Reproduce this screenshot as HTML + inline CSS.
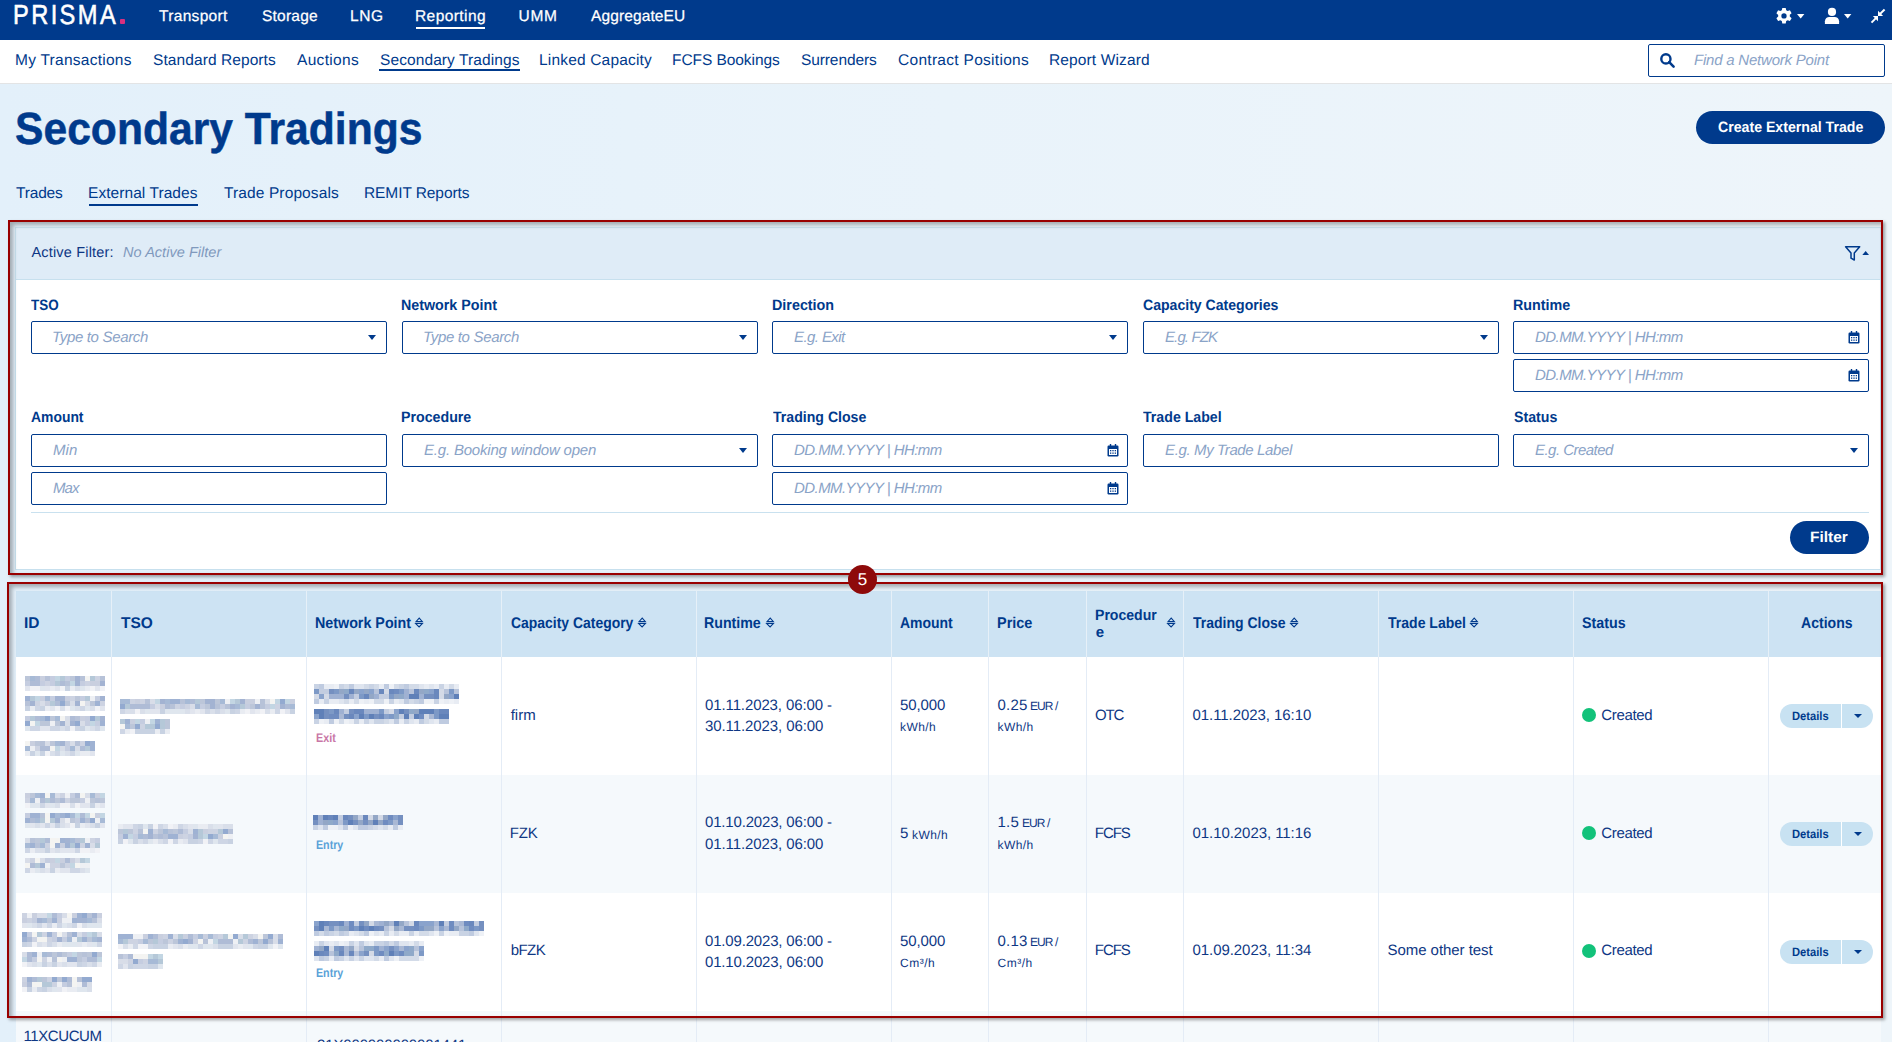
<!DOCTYPE html>
<html><head><meta charset="utf-8"><title>Secondary Tradings</title>
<style>
html,body{margin:0;padding:0;}
body{width:1892px;height:1042px;overflow:hidden;position:relative;font-family:"Liberation Sans",sans-serif;text-rendering:geometricPrecision;background:linear-gradient(90deg,#e3f0fa 0%,#e9f3fa 50%,#eef5fa 100%);}
.t{position:absolute;white-space:nowrap;}
</style></head><body>
<div style="position:absolute;left:0;top:0;width:1892px;height:40px;background:#003a8c;"></div><div class="t" style="left:12.78px;top:1.00px;line-height:27.5px;color:#fff;font-size:27.5px;font-weight:400;letter-spacing:2.786px;transform:scaleX(0.8600);transform-origin:0 0;-webkit-text-stroke:0.55px #fff;">PRISMA</div><div style="position:absolute;left:119.5px;top:18.6px;width:5.5px;height:5px;background:#d9307f;border-radius:1px;"></div><div class="t" style="left:159.00px;top:9.00px;line-height:15.5px;color:#ffffff;font-size:15.5px;font-weight:400;letter-spacing:0.319px;-webkit-text-stroke:0.25px #fff;">Transport</div><div class="t" style="left:262.00px;top:9.00px;line-height:15.5px;color:#ffffff;font-size:15.5px;font-weight:400;letter-spacing:0.222px;-webkit-text-stroke:0.25px #fff;">Storage</div><div class="t" style="left:350.00px;top:9.00px;line-height:15.5px;color:#ffffff;font-size:15.5px;font-weight:400;letter-spacing:0.593px;-webkit-text-stroke:0.25px #fff;">LNG</div><div class="t" style="left:415.00px;top:9.00px;line-height:15.5px;color:#ffffff;font-size:15.5px;font-weight:400;letter-spacing:0.427px;-webkit-text-stroke:0.25px #fff;">Reporting</div><div class="t" style="left:518.50px;top:9.00px;line-height:15.5px;color:#ffffff;font-size:15.5px;font-weight:400;letter-spacing:0.697px;-webkit-text-stroke:0.25px #fff;">UMM</div><div class="t" style="left:591.00px;top:9.00px;line-height:15.5px;color:#ffffff;font-size:15.5px;font-weight:400;letter-spacing:0.113px;-webkit-text-stroke:0.25px #fff;">AggregateEU</div><div style="position:absolute;left:416px;top:27px;width:69px;height:2px;background:#fff;"></div><svg style="position:absolute;left:1774px;top:6px" width="20" height="20" viewBox="0 0 20 20">
<path fill="#fff" fill-rule="evenodd" d="M8.3 2h3.4l.5 2.3 1.5.8 2.2-.8 1.7 2.9-1.8 1.6v1.8l1.8 1.6-1.7 2.9-2.2-.8-1.5.8-.5 2.5H8.3l-.5-2.5-1.5-.8-2.2.8-1.7-2.9 1.8-1.6V8.9L2.4 7.2l1.7-2.9 2.2.8 1.5-.8z M10 7.3a2.6 2.6 0 1 0 0 5.3 2.6 2.6 0 0 0 0-5.3z"/></svg><svg style="position:absolute;left:1796px;top:13px" width="10" height="7"><path d="M1 1H8.4L4.7 5.6z" fill="#fff"/></svg><svg style="position:absolute;left:1824px;top:7px" width="16" height="18" viewBox="0 0 16 18">
<circle cx="8" cy="4.9" r="4.1" fill="#fff"/><path fill="#fff" d="M0.9 17V14.2C0.9 11.6 3.2 10 5.2 10H10.8C12.8 10 15.1 11.6 15.1 14.2V17z"/></svg><svg style="position:absolute;left:1843px;top:13px" width="10" height="7"><path d="M1 1H8.4L4.7 5.6z" fill="#fff"/></svg><svg style="position:absolute;left:1866px;top:4px" width="24" height="24" viewBox="0 0 24 24">
<g stroke="#fff" stroke-width="2" stroke-linecap="butt"><line x1="13.6" y1="10.4" x2="18.6" y2="5.5"/><line x1="10.4" y1="13.6" x2="5.5" y2="18.6"/></g>
<path fill="#fff" d="M12 11.9V6.8L17.1 11.9z M12 12.1V17.2L6.9 12.1z"/></svg><div style="position:absolute;left:0;top:40px;width:1892px;height:43px;background:#fff;border-bottom:1px solid #e3e4e5;"></div><div class="t" style="left:15.00px;top:53.00px;line-height:15.5px;color:#003a8c;font-size:15.5px;font-weight:400;letter-spacing:0.259px;">My Transactions</div><div class="t" style="left:153.00px;top:53.00px;line-height:15.5px;color:#003a8c;font-size:15.5px;font-weight:400;letter-spacing:0.084px;">Standard Reports</div><div class="t" style="left:297.00px;top:53.00px;line-height:15.5px;color:#003a8c;font-size:15.5px;font-weight:400;letter-spacing:0.329px;">Auctions</div><div class="t" style="left:380.00px;top:53.00px;line-height:15.5px;color:#003a8c;font-size:15.5px;font-weight:400;letter-spacing:0.095px;">Secondary Tradings</div><div class="t" style="left:539.00px;top:53.00px;line-height:15.5px;color:#003a8c;font-size:15.5px;font-weight:400;letter-spacing:0.176px;">Linked Capacity</div><div class="t" style="left:672.00px;top:53.00px;line-height:15.5px;color:#003a8c;font-size:15.5px;font-weight:400;letter-spacing:-0.066px;">FCFS Bookings</div><div class="t" style="left:801.00px;top:53.00px;line-height:15.5px;color:#003a8c;font-size:15.5px;font-weight:400;letter-spacing:-0.103px;">Surrenders</div><div class="t" style="left:898.00px;top:53.00px;line-height:15.5px;color:#003a8c;font-size:15.5px;font-weight:400;letter-spacing:0.292px;">Contract Positions</div><div class="t" style="left:1049.00px;top:53.00px;line-height:15.5px;color:#003a8c;font-size:15.5px;font-weight:400;letter-spacing:0.130px;">Report Wizard</div><div style="position:absolute;left:379px;top:69px;width:141px;height:2px;background:#003a8c;"></div><div style="position:absolute;left:1648px;top:44px;width:235px;height:31px;border:1px solid #003a8c;border-radius:2px;background:#fff;"></div><svg style="position:absolute;left:1659px;top:52px" width="17" height="17" viewBox="0 0 17 17">
<circle cx="6.9" cy="6.9" r="4.6" fill="none" stroke="#003a8c" stroke-width="2.4"/><line x1="10.2" y1="10.2" x2="14.6" y2="14.6" stroke="#003a8c" stroke-width="2.6" stroke-linecap="round"/></svg><div class="t" style="left:1694.00px;top:53.00px;line-height:15px;color:#8aa3c7;font-size:15px;font-weight:400;font-style:italic;letter-spacing:-0.214px;">Find a Network Point</div><div class="t" style="left:14.55px;top:106.00px;line-height:45px;color:#003a8c;font-size:45px;font-weight:700;transform:scaleX(0.9472);transform-origin:0 0;-webkit-text-stroke:0.5px #003a8c;">Secondary Tradings</div><div style="position:absolute;left:1696px;top:111px;width:189px;height:33px;border-radius:17px;background:#003a8c;"></div><div class="t" style="left:1718.00px;top:120.00px;line-height:15px;color:#fff;font-size:15px;font-weight:700;transform:scaleX(0.9422);transform-origin:0 0;">Create External Trade</div><div class="t" style="left:16.00px;top:186.00px;line-height:15.5px;color:#003a8c;font-size:15.5px;font-weight:400;letter-spacing:-0.183px;">Trades</div><div class="t" style="left:88.00px;top:186.00px;line-height:15.5px;color:#003a8c;font-size:15.5px;font-weight:400;letter-spacing:0.065px;">External Trades</div><div class="t" style="left:224.00px;top:186.00px;line-height:15.5px;color:#003a8c;font-size:15.5px;font-weight:400;letter-spacing:0.115px;">Trade Proposals</div><div class="t" style="left:364.00px;top:186.00px;line-height:15.5px;color:#003a8c;font-size:15.5px;font-weight:400;letter-spacing:-0.087px;">REMIT Reports</div><div style="position:absolute;left:89px;top:204px;width:109px;height:2px;background:#003a8c;"></div><div style="position:absolute;left:15px;top:227px;width:1864px;height:341px;background:#fff;border:1px solid #c7e0ee;"></div><div style="position:absolute;left:16px;top:228px;width:1864px;height:51px;background:#dfecf7;border-bottom:1px solid #c7e0ee;"></div><div class="t" style="left:31.50px;top:246.00px;line-height:14.5px;color:#0e3784;font-size:14.5px;font-weight:400;letter-spacing:0.174px;">Active Filter:</div><div class="t" style="left:123.00px;top:246.00px;line-height:14.5px;color:#7f99bd;font-size:14.5px;font-weight:400;font-style:italic;letter-spacing:0.035px;">No Active Filter</div><svg style="position:absolute;left:1844px;top:244px" width="28" height="18" viewBox="0 0 28 18">
<path d="M1.6 2.7H15.7L10.3 8.9V16L7 14.2V8.9z" fill="none" stroke="#003a8c" stroke-width="1.5" stroke-linejoin="round"/>
<path d="M18.3 10.9L21.65 7.1L25 10.9z" fill="#003a8c"/></svg><div class="t" style="left:31.00px;top:298.00px;line-height:15px;color:#003a8c;font-size:15px;font-weight:700;transform:scaleX(0.8984);transform-origin:0 0;">TSO</div><div class="t" style="left:401.05px;top:298.00px;line-height:15px;color:#003a8c;font-size:15px;font-weight:700;transform:scaleX(0.9515);transform-origin:0 0;">Network Point</div><div class="t" style="left:771.54px;top:298.00px;line-height:15px;color:#003a8c;font-size:15px;font-weight:700;transform:scaleX(0.9554);transform-origin:0 0;">Direction</div><div class="t" style="left:1143.00px;top:298.00px;line-height:15px;color:#003a8c;font-size:15px;font-weight:700;transform:scaleX(0.9383);transform-origin:0 0;">Capacity Categories</div><div class="t" style="left:1513.05px;top:298.00px;line-height:15px;color:#003a8c;font-size:15px;font-weight:700;transform:scaleX(0.9547);transform-origin:0 0;">Runtime</div><div style="position:absolute;left:31px;top:321px;width:354px;height:31px;border:1px solid #003a8c;border-radius:2px;background:#fff;"></div><div class="t" style="left:52.00px;top:330.00px;line-height:15px;color:#8aa3c7;font-size:15px;font-weight:400;font-style:italic;letter-spacing:-0.328px;">Type to Search</div><div style="position:absolute;left:367.5px;top:335px;width:0;height:0;border-left:4.5px solid transparent;border-right:4.5px solid transparent;border-top:5px solid #003a8c;"></div><div style="position:absolute;left:402px;top:321px;width:354px;height:31px;border:1px solid #003a8c;border-radius:2px;background:#fff;"></div><div class="t" style="left:423.00px;top:330.00px;line-height:15px;color:#8aa3c7;font-size:15px;font-weight:400;font-style:italic;letter-spacing:-0.328px;">Type to Search</div><div style="position:absolute;left:738.5px;top:335px;width:0;height:0;border-left:4.5px solid transparent;border-right:4.5px solid transparent;border-top:5px solid #003a8c;"></div><div style="position:absolute;left:772px;top:321px;width:354px;height:31px;border:1px solid #003a8c;border-radius:2px;background:#fff;"></div><div class="t" style="left:794.00px;top:330.00px;line-height:15px;color:#8aa3c7;font-size:15px;font-weight:400;font-style:italic;letter-spacing:-0.586px;">E.g. Exit</div><div style="position:absolute;left:1108.5px;top:335px;width:0;height:0;border-left:4.5px solid transparent;border-right:4.5px solid transparent;border-top:5px solid #003a8c;"></div><div style="position:absolute;left:1143px;top:321px;width:354px;height:31px;border:1px solid #003a8c;border-radius:2px;background:#fff;"></div><div class="t" style="left:1165.00px;top:330.00px;line-height:15px;color:#8aa3c7;font-size:15px;font-weight:400;font-style:italic;letter-spacing:-0.882px;">E.g. FZK</div><div style="position:absolute;left:1479.5px;top:335px;width:0;height:0;border-left:4.5px solid transparent;border-right:4.5px solid transparent;border-top:5px solid #003a8c;"></div><div style="position:absolute;left:1513px;top:321px;width:354px;height:31px;border:1px solid #003a8c;border-radius:2px;background:#fff;"></div><div class="t" style="left:1535.00px;top:330.00px;line-height:15px;color:#8aa3c7;font-size:15px;font-weight:400;font-style:italic;letter-spacing:-0.563px;">DD.MM.YYYY | HH:mm</div><svg style="position:absolute;left:1848px;top:331px" width="12" height="13" viewBox="0 0 12 13">
<rect x="0.5" y="1.5" width="11" height="11" rx="1.2" fill="#003a8c"/><rect x="2" y="5" width="8" height="6" fill="#fff"/>
<rect x="2.8" y="0" width="1.4" height="3" fill="#003a8c"/><rect x="7.8" y="0" width="1.4" height="3" fill="#003a8c"/>
<g fill="#003a8c"><rect x="3" y="6" width="1.3" height="1.3"/><rect x="5.35" y="6" width="1.3" height="1.3"/><rect x="7.7" y="6" width="1.3" height="1.3"/>
<rect x="3" y="8.5" width="1.3" height="1.3"/><rect x="5.35" y="8.5" width="1.3" height="1.3"/><rect x="7.7" y="8.5" width="1.3" height="1.3"/></g></svg><div style="position:absolute;left:1513px;top:359px;width:354px;height:31px;border:1px solid #003a8c;border-radius:2px;background:#fff;"></div><div class="t" style="left:1535.00px;top:368.00px;line-height:15px;color:#8aa3c7;font-size:15px;font-weight:400;font-style:italic;letter-spacing:-0.563px;">DD.MM.YYYY | HH:mm</div><svg style="position:absolute;left:1848px;top:369px" width="12" height="13" viewBox="0 0 12 13">
<rect x="0.5" y="1.5" width="11" height="11" rx="1.2" fill="#003a8c"/><rect x="2" y="5" width="8" height="6" fill="#fff"/>
<rect x="2.8" y="0" width="1.4" height="3" fill="#003a8c"/><rect x="7.8" y="0" width="1.4" height="3" fill="#003a8c"/>
<g fill="#003a8c"><rect x="3" y="6" width="1.3" height="1.3"/><rect x="5.35" y="6" width="1.3" height="1.3"/><rect x="7.7" y="6" width="1.3" height="1.3"/>
<rect x="3" y="8.5" width="1.3" height="1.3"/><rect x="5.35" y="8.5" width="1.3" height="1.3"/><rect x="7.7" y="8.5" width="1.3" height="1.3"/></g></svg><div class="t" style="left:31.00px;top:410.00px;line-height:15px;color:#003a8c;font-size:15px;font-weight:700;transform:scaleX(0.9266);transform-origin:0 0;">Amount</div><div class="t" style="left:401.05px;top:410.00px;line-height:15px;color:#003a8c;font-size:15px;font-weight:700;transform:scaleX(0.9471);transform-origin:0 0;">Procedure</div><div class="t" style="left:772.50px;top:410.00px;line-height:15px;color:#003a8c;font-size:15px;font-weight:700;transform:scaleX(0.9409);transform-origin:0 0;">Trading Close</div><div class="t" style="left:1143.00px;top:410.00px;line-height:15px;color:#003a8c;font-size:15px;font-weight:700;transform:scaleX(0.9435);transform-origin:0 0;">Trade Label</div><div class="t" style="left:1514.00px;top:410.00px;line-height:15px;color:#003a8c;font-size:15px;font-weight:700;transform:scaleX(0.9451);transform-origin:0 0;">Status</div><div style="position:absolute;left:31px;top:434px;width:354px;height:31px;border:1px solid #003a8c;border-radius:2px;background:#fff;"></div><div class="t" style="left:53.00px;top:443.00px;line-height:15px;color:#8aa3c7;font-size:15px;font-weight:400;font-style:italic;letter-spacing:0.086px;">Min</div><div style="position:absolute;left:31px;top:472px;width:354px;height:31px;border:1px solid #003a8c;border-radius:2px;background:#fff;"></div><div class="t" style="left:53.00px;top:481.00px;line-height:15px;color:#8aa3c7;font-size:15px;font-weight:400;font-style:italic;letter-spacing:-0.919px;">Max</div><div style="position:absolute;left:402px;top:434px;width:354px;height:31px;border:1px solid #003a8c;border-radius:2px;background:#fff;"></div><div class="t" style="left:424.00px;top:443.00px;line-height:15px;color:#8aa3c7;font-size:15px;font-weight:400;font-style:italic;letter-spacing:-0.193px;">E.g. Booking window open</div><div style="position:absolute;left:738.5px;top:448px;width:0;height:0;border-left:4.5px solid transparent;border-right:4.5px solid transparent;border-top:5px solid #003a8c;"></div><div style="position:absolute;left:772px;top:434px;width:354px;height:31px;border:1px solid #003a8c;border-radius:2px;background:#fff;"></div><div class="t" style="left:794.00px;top:443.00px;line-height:15px;color:#8aa3c7;font-size:15px;font-weight:400;font-style:italic;letter-spacing:-0.563px;">DD.MM.YYYY | HH:mm</div><svg style="position:absolute;left:1107px;top:444px" width="12" height="13" viewBox="0 0 12 13">
<rect x="0.5" y="1.5" width="11" height="11" rx="1.2" fill="#003a8c"/><rect x="2" y="5" width="8" height="6" fill="#fff"/>
<rect x="2.8" y="0" width="1.4" height="3" fill="#003a8c"/><rect x="7.8" y="0" width="1.4" height="3" fill="#003a8c"/>
<g fill="#003a8c"><rect x="3" y="6" width="1.3" height="1.3"/><rect x="5.35" y="6" width="1.3" height="1.3"/><rect x="7.7" y="6" width="1.3" height="1.3"/>
<rect x="3" y="8.5" width="1.3" height="1.3"/><rect x="5.35" y="8.5" width="1.3" height="1.3"/><rect x="7.7" y="8.5" width="1.3" height="1.3"/></g></svg><div style="position:absolute;left:772px;top:472px;width:354px;height:31px;border:1px solid #003a8c;border-radius:2px;background:#fff;"></div><div class="t" style="left:794.00px;top:481.00px;line-height:15px;color:#8aa3c7;font-size:15px;font-weight:400;font-style:italic;letter-spacing:-0.563px;">DD.MM.YYYY | HH:mm</div><svg style="position:absolute;left:1107px;top:482px" width="12" height="13" viewBox="0 0 12 13">
<rect x="0.5" y="1.5" width="11" height="11" rx="1.2" fill="#003a8c"/><rect x="2" y="5" width="8" height="6" fill="#fff"/>
<rect x="2.8" y="0" width="1.4" height="3" fill="#003a8c"/><rect x="7.8" y="0" width="1.4" height="3" fill="#003a8c"/>
<g fill="#003a8c"><rect x="3" y="6" width="1.3" height="1.3"/><rect x="5.35" y="6" width="1.3" height="1.3"/><rect x="7.7" y="6" width="1.3" height="1.3"/>
<rect x="3" y="8.5" width="1.3" height="1.3"/><rect x="5.35" y="8.5" width="1.3" height="1.3"/><rect x="7.7" y="8.5" width="1.3" height="1.3"/></g></svg><div style="position:absolute;left:1143px;top:434px;width:354px;height:31px;border:1px solid #003a8c;border-radius:2px;background:#fff;"></div><div class="t" style="left:1165.00px;top:443.00px;line-height:15px;color:#8aa3c7;font-size:15px;font-weight:400;font-style:italic;letter-spacing:-0.368px;">E.g. My Trade Label</div><div style="position:absolute;left:1513px;top:434px;width:354px;height:31px;border:1px solid #003a8c;border-radius:2px;background:#fff;"></div><div class="t" style="left:1535.00px;top:443.00px;line-height:15px;color:#8aa3c7;font-size:15px;font-weight:400;font-style:italic;letter-spacing:-0.534px;">E.g. Created</div><div style="position:absolute;left:1849.5px;top:448px;width:0;height:0;border-left:4.5px solid transparent;border-right:4.5px solid transparent;border-top:5px solid #003a8c;"></div><div style="position:absolute;left:31px;top:512px;width:1838px;height:1px;background:#c9e1ef;"></div><div style="position:absolute;left:1790px;top:521px;width:79px;height:33px;border-radius:17px;background:#003a8c;"></div><div class="t" style="left:1809.97px;top:530.00px;line-height:15px;color:#fff;font-size:15px;font-weight:700;transform:scaleX(1.0325);transform-origin:0 0;">Filter</div><div style="position:absolute;left:16px;top:591px;width:1865px;height:66px;background:#cde3f3;"></div><div style="position:absolute;left:16px;top:657px;width:1865px;height:118px;background:#ffffff;"></div><div style="position:absolute;left:16px;top:775px;width:1865px;height:118px;background:#f5f9fc;"></div><div style="position:absolute;left:16px;top:893px;width:1865px;height:118px;background:#ffffff;"></div><div style="position:absolute;left:16px;top:1011px;width:1865px;height:118px;background:#f5f9fc;"></div><div style="position:absolute;left:111px;top:591px;width:1px;height:66px;background:#e6f0f8;"></div><div style="position:absolute;left:111px;top:657px;width:1px;height:385px;background:#e4ecf6;"></div><div style="position:absolute;left:306px;top:591px;width:1px;height:66px;background:#e6f0f8;"></div><div style="position:absolute;left:306px;top:657px;width:1px;height:385px;background:#e4ecf6;"></div><div style="position:absolute;left:501px;top:591px;width:1px;height:66px;background:#e6f0f8;"></div><div style="position:absolute;left:501px;top:657px;width:1px;height:385px;background:#e4ecf6;"></div><div style="position:absolute;left:696px;top:591px;width:1px;height:66px;background:#e6f0f8;"></div><div style="position:absolute;left:696px;top:657px;width:1px;height:385px;background:#e4ecf6;"></div><div style="position:absolute;left:891px;top:591px;width:1px;height:66px;background:#e6f0f8;"></div><div style="position:absolute;left:891px;top:657px;width:1px;height:385px;background:#e4ecf6;"></div><div style="position:absolute;left:988px;top:591px;width:1px;height:66px;background:#e6f0f8;"></div><div style="position:absolute;left:988px;top:657px;width:1px;height:385px;background:#e4ecf6;"></div><div style="position:absolute;left:1086px;top:591px;width:1px;height:66px;background:#e6f0f8;"></div><div style="position:absolute;left:1086px;top:657px;width:1px;height:385px;background:#e4ecf6;"></div><div style="position:absolute;left:1183px;top:591px;width:1px;height:66px;background:#e6f0f8;"></div><div style="position:absolute;left:1183px;top:657px;width:1px;height:385px;background:#e4ecf6;"></div><div style="position:absolute;left:1378px;top:591px;width:1px;height:66px;background:#e6f0f8;"></div><div style="position:absolute;left:1378px;top:657px;width:1px;height:385px;background:#e4ecf6;"></div><div style="position:absolute;left:1573px;top:591px;width:1px;height:66px;background:#e6f0f8;"></div><div style="position:absolute;left:1573px;top:657px;width:1px;height:385px;background:#e4ecf6;"></div><div style="position:absolute;left:1768px;top:591px;width:1px;height:66px;background:#e6f0f8;"></div><div style="position:absolute;left:1768px;top:657px;width:1px;height:385px;background:#e4ecf6;"></div><div class="t" style="left:24.00px;top:616.00px;line-height:15.5px;color:#003a8c;font-size:15.5px;font-weight:700;">ID</div><div class="t" style="left:121.00px;top:616.00px;line-height:15.5px;color:#003a8c;font-size:15.5px;font-weight:700;">TSO</div><div class="t" style="left:315.08px;top:616.00px;line-height:15.5px;color:#003a8c;font-size:15.5px;font-weight:700;transform:scaleX(0.9220);transform-origin:0 0;">Network Point</div><svg style="position:absolute;left:414px;top:616px" width="10" height="12" viewBox="0 0 10 12">
<path d="M2 5.6H8.4L5.2 2.1z M1.6 7.4H8.4L5.1 10.9z" fill="none" stroke="#003a8c" stroke-width="1.05" stroke-linejoin="miter"/></svg><div class="t" style="left:510.50px;top:616.00px;line-height:15.5px;color:#003a8c;font-size:15.5px;font-weight:700;transform:scaleX(0.8990);transform-origin:0 0;">Capacity Category</div><svg style="position:absolute;left:636.5px;top:616px" width="10" height="12" viewBox="0 0 10 12">
<path d="M2 5.6H8.4L5.2 2.1z M1.6 7.4H8.4L5.1 10.9z" fill="none" stroke="#003a8c" stroke-width="1.05" stroke-linejoin="miter"/></svg><div class="t" style="left:704.08px;top:616.00px;line-height:15.5px;color:#003a8c;font-size:15.5px;font-weight:700;transform:scaleX(0.9156);transform-origin:0 0;">Runtime</div><svg style="position:absolute;left:764.5px;top:616px" width="10" height="12" viewBox="0 0 10 12">
<path d="M2 5.6H8.4L5.2 2.1z M1.6 7.4H8.4L5.1 10.9z" fill="none" stroke="#003a8c" stroke-width="1.05" stroke-linejoin="miter"/></svg><div class="t" style="left:900.00px;top:616.00px;line-height:15.5px;color:#003a8c;font-size:15.5px;font-weight:700;transform:scaleX(0.9010);transform-origin:0 0;">Amount</div><div class="t" style="left:996.57px;top:616.00px;line-height:15.5px;color:#003a8c;font-size:15.5px;font-weight:700;transform:scaleX(0.9330);transform-origin:0 0;">Price</div><div class="t" style="left:1094.86px;top:608.00px;line-height:15px;color:#003a8c;font-size:15px;font-weight:700;transform:scaleX(0.9383);transform-origin:0 0;">Procedur</div><div class="t" style="left:1095.80px;top:625.00px;line-height:15px;color:#003a8c;font-size:15px;font-weight:700;">e</div><svg style="position:absolute;left:1165.5px;top:616px" width="10" height="12" viewBox="0 0 10 12">
<path d="M2 5.6H8.4L5.2 2.1z M1.6 7.4H8.4L5.1 10.9z" fill="none" stroke="#003a8c" stroke-width="1.05" stroke-linejoin="miter"/></svg><div class="t" style="left:1192.50px;top:616.00px;line-height:15.5px;color:#003a8c;font-size:15.5px;font-weight:700;transform:scaleX(0.9041);transform-origin:0 0;">Trading Close</div><svg style="position:absolute;left:1288.5px;top:616px" width="10" height="12" viewBox="0 0 10 12">
<path d="M2 5.6H8.4L5.2 2.1z M1.6 7.4H8.4L5.1 10.9z" fill="none" stroke="#003a8c" stroke-width="1.05" stroke-linejoin="miter"/></svg><div class="t" style="left:1388.00px;top:616.00px;line-height:15.5px;color:#003a8c;font-size:15.5px;font-weight:700;transform:scaleX(0.9052);transform-origin:0 0;">Trade Label</div><svg style="position:absolute;left:1469px;top:616px" width="10" height="12" viewBox="0 0 10 12">
<path d="M2 5.6H8.4L5.2 2.1z M1.6 7.4H8.4L5.1 10.9z" fill="none" stroke="#003a8c" stroke-width="1.05" stroke-linejoin="miter"/></svg><div class="t" style="left:1582.00px;top:616.00px;line-height:15.5px;color:#003a8c;font-size:15.5px;font-weight:700;transform:scaleX(0.9198);transform-origin:0 0;">Status</div><div class="t" style="left:1801.00px;top:616.00px;line-height:15.5px;color:#003a8c;font-size:15.5px;font-weight:700;transform:scaleX(0.9072);transform-origin:0 0;">Actions</div><svg style="position:absolute;left:25px;top:676px" width="80" height="15" shape-rendering="crispEdges"><rect x="0" y="0" width="5" height="5" fill="#bcc6d9"/><rect x="5" y="0" width="5" height="5" fill="#a7bad6"/><rect x="10" y="0" width="5" height="5" fill="#afbcd6"/><rect x="15" y="0" width="5" height="5" fill="#c9cfdf"/><rect x="20" y="0" width="5" height="5" fill="#b7c2d8"/><rect x="25" y="0" width="5" height="5" fill="#c5cde0"/><rect x="30" y="0" width="5" height="5" fill="#c3d6e3"/><rect x="35" y="0" width="5" height="5" fill="#b5c8d8"/><rect x="40" y="0" width="5" height="5" fill="#c5cde0"/><rect x="45" y="0" width="5" height="5" fill="#bcc6d9"/><rect x="50" y="0" width="5" height="5" fill="#a3b3d2"/><rect x="55" y="0" width="5" height="5" fill="#b7c2d8"/><rect x="60" y="0" width="5" height="5" fill="#f4f4f2"/><rect x="65" y="0" width="5" height="5" fill="#b5c8d8"/><rect x="70" y="0" width="5" height="5" fill="#cdd3e2"/><rect x="75" y="0" width="5" height="5" fill="#b7c2d8"/><rect x="0" y="5" width="5" height="5" fill="#c5cde0"/><rect x="5" y="5" width="5" height="5" fill="#afbcd6"/><rect x="10" y="5" width="5" height="5" fill="#afbcd6"/><rect x="15" y="5" width="5" height="5" fill="#c5cde0"/><rect x="20" y="5" width="5" height="5" fill="#cdd3e2"/><rect x="25" y="5" width="5" height="5" fill="#c5cde0"/><rect x="30" y="5" width="5" height="5" fill="#b5c8d8"/><rect x="35" y="5" width="5" height="5" fill="#afbcd6"/><rect x="40" y="5" width="5" height="5" fill="#b7c2d8"/><rect x="45" y="5" width="5" height="5" fill="#c3d6e3"/><rect x="50" y="5" width="5" height="5" fill="#a3b3d2"/><rect x="55" y="5" width="5" height="5" fill="#c5cde0"/><rect x="60" y="5" width="5" height="5" fill="#cdd3e2"/><rect x="65" y="5" width="5" height="5" fill="#c9cfdf"/><rect x="70" y="5" width="5" height="5" fill="#c9cfdf"/><rect x="75" y="5" width="5" height="5" fill="#a3b3d2"/><rect x="0" y="10" width="5" height="5" fill="#e1e5ee"/><rect x="5" y="10" width="5" height="5" fill="#f1f2f6"/><rect x="10" y="10" width="5" height="5" fill="#f1f2f6"/><rect x="15" y="10" width="5" height="5" fill="#dfe6ee"/><rect x="20" y="10" width="5" height="5" fill="#e1e5ee"/><rect x="25" y="10" width="5" height="5" fill="#e9ecf2"/><rect x="30" y="10" width="5" height="5" fill="#e1e5ee"/><rect x="35" y="10" width="5" height="5" fill="#f1f2f6"/><rect x="40" y="10" width="5" height="5" fill="#c8d2e2"/><rect x="45" y="10" width="5" height="5" fill="#e9ecf2"/><rect x="50" y="10" width="5" height="5" fill="#d9dfea"/><rect x="55" y="10" width="5" height="5" fill="#dfe6ee"/><rect x="60" y="10" width="5" height="5" fill="#e9ecf2"/><rect x="65" y="10" width="5" height="5" fill="#f1f2f6"/><rect x="70" y="10" width="5" height="5" fill="#e1e5ee"/><rect x="75" y="10" width="5" height="5" fill="#f1f2f6"/></svg><svg style="position:absolute;left:25px;top:696px" width="80" height="15" shape-rendering="crispEdges"><rect x="0" y="0" width="5" height="5" fill="#9fb2d3"/><rect x="5" y="0" width="5" height="5" fill="#b5c8d8"/><rect x="10" y="0" width="5" height="5" fill="#c3d6e3"/><rect x="15" y="0" width="5" height="5" fill="#c9cfdf"/><rect x="20" y="0" width="5" height="5" fill="#a7bad6"/><rect x="25" y="0" width="5" height="5" fill="#c5cde0"/><rect x="30" y="0" width="5" height="5" fill="#a3b3d2"/><rect x="35" y="0" width="5" height="5" fill="#a3b3d2"/><rect x="40" y="0" width="5" height="5" fill="#c9cfdf"/><rect x="45" y="0" width="5" height="5" fill="#cdd3e2"/><rect x="50" y="0" width="5" height="5" fill="#bcc6d9"/><rect x="55" y="0" width="5" height="5" fill="#c5cde0"/><rect x="60" y="0" width="5" height="5" fill="#b5c8d8"/><rect x="65" y="0" width="5" height="5" fill="#eef0f4"/><rect x="70" y="0" width="5" height="5" fill="#c5cde0"/><rect x="75" y="0" width="5" height="5" fill="#a3b3d2"/><rect x="0" y="5" width="5" height="5" fill="#b7c2d8"/><rect x="5" y="5" width="5" height="5" fill="#a3b3d2"/><rect x="10" y="5" width="5" height="5" fill="#cdd3e2"/><rect x="15" y="5" width="5" height="5" fill="#d8dde8"/><rect x="20" y="5" width="5" height="5" fill="#c9cfdf"/><rect x="25" y="5" width="5" height="5" fill="#b5c8d8"/><rect x="30" y="5" width="5" height="5" fill="#afbcd6"/><rect x="35" y="5" width="5" height="5" fill="#93aad0"/><rect x="40" y="5" width="5" height="5" fill="#bcc6d9"/><rect x="45" y="5" width="5" height="5" fill="#d8dde8"/><rect x="50" y="5" width="5" height="5" fill="#a3b3d2"/><rect x="55" y="5" width="5" height="5" fill="#f4f4f2"/><rect x="60" y="5" width="5" height="5" fill="#d8dde8"/><rect x="65" y="5" width="5" height="5" fill="#bcc6d9"/><rect x="70" y="5" width="5" height="5" fill="#9fb2d3"/><rect x="75" y="5" width="5" height="5" fill="#cdd3e2"/><rect x="0" y="10" width="5" height="5" fill="#c8d2e2"/><rect x="5" y="10" width="5" height="5" fill="#e9ecf2"/><rect x="10" y="10" width="5" height="5" fill="#ced6e5"/><rect x="15" y="10" width="5" height="5" fill="#c8d2e2"/><rect x="20" y="10" width="5" height="5" fill="#e9ecf2"/><rect x="25" y="10" width="5" height="5" fill="#e1e5ee"/><rect x="30" y="10" width="5" height="5" fill="#f1f2f6"/><rect x="35" y="10" width="5" height="5" fill="#d9dfea"/><rect x="40" y="10" width="5" height="5" fill="#f1f2f6"/><rect x="45" y="10" width="5" height="5" fill="#dfe6ee"/><rect x="50" y="10" width="5" height="5" fill="#d9dfea"/><rect x="55" y="10" width="5" height="5" fill="#ced6e5"/><rect x="60" y="10" width="5" height="5" fill="#dfe6ee"/><rect x="65" y="10" width="5" height="5" fill="#d9dfea"/><rect x="70" y="10" width="5" height="5" fill="#f1f2f6"/><rect x="75" y="10" width="5" height="5" fill="#e1e5ee"/></svg><svg style="position:absolute;left:25px;top:716px" width="80" height="15" shape-rendering="crispEdges"><rect x="0" y="0" width="5" height="5" fill="#c5cde0"/><rect x="5" y="0" width="5" height="5" fill="#b5c8d8"/><rect x="10" y="0" width="5" height="5" fill="#afbcd6"/><rect x="15" y="0" width="5" height="5" fill="#a7bad6"/><rect x="20" y="0" width="5" height="5" fill="#93aad0"/><rect x="25" y="0" width="5" height="5" fill="#bcc6d9"/><rect x="30" y="0" width="5" height="5" fill="#a7bad6"/><rect x="35" y="0" width="5" height="5" fill="#f4f4f2"/><rect x="40" y="0" width="5" height="5" fill="#d8dde8"/><rect x="45" y="0" width="5" height="5" fill="#afbcd6"/><rect x="50" y="0" width="5" height="5" fill="#b7c2d8"/><rect x="55" y="0" width="5" height="5" fill="#c9cfdf"/><rect x="60" y="0" width="5" height="5" fill="#c5cde0"/><rect x="65" y="0" width="5" height="5" fill="#93aad0"/><rect x="70" y="0" width="5" height="5" fill="#b5c8d8"/><rect x="75" y="0" width="5" height="5" fill="#a3b3d2"/><rect x="0" y="5" width="5" height="5" fill="#93aad0"/><rect x="5" y="5" width="5" height="5" fill="#f4f4f2"/><rect x="10" y="5" width="5" height="5" fill="#c3d6e3"/><rect x="15" y="5" width="5" height="5" fill="#bcc6d9"/><rect x="20" y="5" width="5" height="5" fill="#bcc6d9"/><rect x="25" y="5" width="5" height="5" fill="#eef0f4"/><rect x="30" y="5" width="5" height="5" fill="#bcc6d9"/><rect x="35" y="5" width="5" height="5" fill="#a3b3d2"/><rect x="40" y="5" width="5" height="5" fill="#d8dde8"/><rect x="45" y="5" width="5" height="5" fill="#a3b3d2"/><rect x="50" y="5" width="5" height="5" fill="#93aad0"/><rect x="55" y="5" width="5" height="5" fill="#d8dde8"/><rect x="60" y="5" width="5" height="5" fill="#c5cde0"/><rect x="65" y="5" width="5" height="5" fill="#c3d6e3"/><rect x="70" y="5" width="5" height="5" fill="#c5cde0"/><rect x="75" y="5" width="5" height="5" fill="#9fb2d3"/><rect x="0" y="10" width="5" height="5" fill="#dfe6ee"/><rect x="5" y="10" width="5" height="5" fill="#ced6e5"/><rect x="10" y="10" width="5" height="5" fill="#ced6e5"/><rect x="15" y="10" width="5" height="5" fill="#e1e5ee"/><rect x="20" y="10" width="5" height="5" fill="#e1e5ee"/><rect x="25" y="10" width="5" height="5" fill="#ced6e5"/><rect x="30" y="10" width="5" height="5" fill="#ced6e5"/><rect x="35" y="10" width="5" height="5" fill="#d9dfea"/><rect x="40" y="10" width="5" height="5" fill="#ced6e5"/><rect x="45" y="10" width="5" height="5" fill="#f1f2f6"/><rect x="50" y="10" width="5" height="5" fill="#ced6e5"/><rect x="55" y="10" width="5" height="5" fill="#c8d2e2"/><rect x="60" y="10" width="5" height="5" fill="#dfe6ee"/><rect x="65" y="10" width="5" height="5" fill="#d9dfea"/><rect x="70" y="10" width="5" height="5" fill="#ced6e5"/><rect x="75" y="10" width="5" height="5" fill="#dfe6ee"/></svg><svg style="position:absolute;left:25px;top:741px" width="70" height="15" shape-rendering="crispEdges"><rect x="0" y="0" width="5" height="5" fill="#f4f4f2"/><rect x="5" y="0" width="5" height="5" fill="#c9cfdf"/><rect x="10" y="0" width="5" height="5" fill="#bcc6d9"/><rect x="15" y="0" width="5" height="5" fill="#b7c2d8"/><rect x="20" y="0" width="5" height="5" fill="#d8dde8"/><rect x="25" y="0" width="5" height="5" fill="#bcc6d9"/><rect x="30" y="0" width="5" height="5" fill="#a7bad6"/><rect x="35" y="0" width="5" height="5" fill="#a3b3d2"/><rect x="40" y="0" width="5" height="5" fill="#c5cde0"/><rect x="45" y="0" width="5" height="5" fill="#d8dde8"/><rect x="50" y="0" width="5" height="5" fill="#b7c2d8"/><rect x="55" y="0" width="5" height="5" fill="#cdd3e2"/><rect x="60" y="0" width="5" height="5" fill="#93aad0"/><rect x="65" y="0" width="5" height="5" fill="#9fb2d3"/><rect x="0" y="5" width="5" height="5" fill="#a7bad6"/><rect x="5" y="5" width="5" height="5" fill="#eef0f4"/><rect x="10" y="5" width="5" height="5" fill="#cdd3e2"/><rect x="15" y="5" width="5" height="5" fill="#afbcd6"/><rect x="20" y="5" width="5" height="5" fill="#afbcd6"/><rect x="25" y="5" width="5" height="5" fill="#f4f4f2"/><rect x="30" y="5" width="5" height="5" fill="#c3d6e3"/><rect x="35" y="5" width="5" height="5" fill="#d8dde8"/><rect x="40" y="5" width="5" height="5" fill="#c5cde0"/><rect x="45" y="5" width="5" height="5" fill="#a7bad6"/><rect x="50" y="5" width="5" height="5" fill="#d8dde8"/><rect x="55" y="5" width="5" height="5" fill="#afbcd6"/><rect x="60" y="5" width="5" height="5" fill="#b5c8d8"/><rect x="65" y="5" width="5" height="5" fill="#9fb2d3"/><rect x="0" y="10" width="5" height="5" fill="#e9ecf2"/><rect x="5" y="10" width="5" height="5" fill="#c8d2e2"/><rect x="10" y="10" width="5" height="5" fill="#dfe6ee"/><rect x="15" y="10" width="5" height="5" fill="#c8d2e2"/><rect x="20" y="10" width="5" height="5" fill="#f1f2f6"/><rect x="25" y="10" width="5" height="5" fill="#d9dfea"/><rect x="30" y="10" width="5" height="5" fill="#ced6e5"/><rect x="35" y="10" width="5" height="5" fill="#dfe6ee"/><rect x="40" y="10" width="5" height="5" fill="#d9dfea"/><rect x="45" y="10" width="5" height="5" fill="#ced6e5"/><rect x="50" y="10" width="5" height="5" fill="#dfe6ee"/><rect x="55" y="10" width="5" height="5" fill="#e9ecf2"/><rect x="60" y="10" width="5" height="5" fill="#e9ecf2"/><rect x="65" y="10" width="5" height="5" fill="#e1e5ee"/></svg><svg style="position:absolute;left:120px;top:699px" width="175" height="15" shape-rendering="crispEdges"><rect x="0" y="0" width="5" height="5" fill="#a7bad6"/><rect x="5" y="0" width="5" height="5" fill="#a7bad6"/><rect x="10" y="0" width="5" height="5" fill="#cdd3e2"/><rect x="15" y="0" width="5" height="5" fill="#c9cfdf"/><rect x="20" y="0" width="5" height="5" fill="#cdd3e2"/><rect x="25" y="0" width="5" height="5" fill="#b7c2d8"/><rect x="30" y="0" width="5" height="5" fill="#d8dde8"/><rect x="35" y="0" width="5" height="5" fill="#c3d6e3"/><rect x="40" y="0" width="5" height="5" fill="#a3b3d2"/><rect x="45" y="0" width="5" height="5" fill="#a7bad6"/><rect x="50" y="0" width="5" height="5" fill="#9fb2d3"/><rect x="55" y="0" width="5" height="5" fill="#9fb2d3"/><rect x="60" y="0" width="5" height="5" fill="#b7c2d8"/><rect x="65" y="0" width="5" height="5" fill="#a7bad6"/><rect x="70" y="0" width="5" height="5" fill="#afbcd6"/><rect x="75" y="0" width="5" height="5" fill="#b5c8d8"/><rect x="80" y="0" width="5" height="5" fill="#bcc6d9"/><rect x="85" y="0" width="5" height="5" fill="#a3b3d2"/><rect x="90" y="0" width="5" height="5" fill="#a3b3d2"/><rect x="95" y="0" width="5" height="5" fill="#bcc6d9"/><rect x="100" y="0" width="5" height="5" fill="#a7bad6"/><rect x="105" y="0" width="5" height="5" fill="#eef0f4"/><rect x="110" y="0" width="5" height="5" fill="#c3d6e3"/><rect x="115" y="0" width="5" height="5" fill="#b5c8d8"/><rect x="120" y="0" width="5" height="5" fill="#a3b3d2"/><rect x="125" y="0" width="5" height="5" fill="#c9cfdf"/><rect x="130" y="0" width="5" height="5" fill="#c9cfdf"/><rect x="135" y="0" width="5" height="5" fill="#eef0f4"/><rect x="140" y="0" width="5" height="5" fill="#b7c2d8"/><rect x="145" y="0" width="5" height="5" fill="#d8dde8"/><rect x="150" y="0" width="5" height="5" fill="#f4f4f2"/><rect x="155" y="0" width="5" height="5" fill="#c3d6e3"/><rect x="160" y="0" width="5" height="5" fill="#93aad0"/><rect x="165" y="0" width="5" height="5" fill="#c3d6e3"/><rect x="170" y="0" width="5" height="5" fill="#c9cfdf"/><rect x="0" y="5" width="5" height="5" fill="#93aad0"/><rect x="5" y="5" width="5" height="5" fill="#b5c8d8"/><rect x="10" y="5" width="5" height="5" fill="#afbcd6"/><rect x="15" y="5" width="5" height="5" fill="#afbcd6"/><rect x="20" y="5" width="5" height="5" fill="#afbcd6"/><rect x="25" y="5" width="5" height="5" fill="#afbcd6"/><rect x="30" y="5" width="5" height="5" fill="#c5cde0"/><rect x="35" y="5" width="5" height="5" fill="#d8dde8"/><rect x="40" y="5" width="5" height="5" fill="#c9cfdf"/><rect x="45" y="5" width="5" height="5" fill="#afbcd6"/><rect x="50" y="5" width="5" height="5" fill="#b7c2d8"/><rect x="55" y="5" width="5" height="5" fill="#cdd3e2"/><rect x="60" y="5" width="5" height="5" fill="#c5cde0"/><rect x="65" y="5" width="5" height="5" fill="#cdd3e2"/><rect x="70" y="5" width="5" height="5" fill="#d8dde8"/><rect x="75" y="5" width="5" height="5" fill="#a7bad6"/><rect x="80" y="5" width="5" height="5" fill="#c5cde0"/><rect x="85" y="5" width="5" height="5" fill="#bcc6d9"/><rect x="90" y="5" width="5" height="5" fill="#a3b3d2"/><rect x="95" y="5" width="5" height="5" fill="#b7c2d8"/><rect x="100" y="5" width="5" height="5" fill="#c5cde0"/><rect x="105" y="5" width="5" height="5" fill="#b7c2d8"/><rect x="110" y="5" width="5" height="5" fill="#a3b3d2"/><rect x="115" y="5" width="5" height="5" fill="#a7bad6"/><rect x="120" y="5" width="5" height="5" fill="#b5c8d8"/><rect x="125" y="5" width="5" height="5" fill="#c5cde0"/><rect x="130" y="5" width="5" height="5" fill="#bcc6d9"/><rect x="135" y="5" width="5" height="5" fill="#a3b3d2"/><rect x="140" y="5" width="5" height="5" fill="#b7c2d8"/><rect x="145" y="5" width="5" height="5" fill="#c5cde0"/><rect x="150" y="5" width="5" height="5" fill="#c3d6e3"/><rect x="155" y="5" width="5" height="5" fill="#cdd3e2"/><rect x="160" y="5" width="5" height="5" fill="#a3b3d2"/><rect x="165" y="5" width="5" height="5" fill="#afbcd6"/><rect x="170" y="5" width="5" height="5" fill="#a7bad6"/><rect x="0" y="10" width="5" height="5" fill="#ced6e5"/><rect x="5" y="10" width="5" height="5" fill="#d9dfea"/><rect x="10" y="10" width="5" height="5" fill="#d9dfea"/><rect x="15" y="10" width="5" height="5" fill="#f1f2f6"/><rect x="20" y="10" width="5" height="5" fill="#d9dfea"/><rect x="25" y="10" width="5" height="5" fill="#dfe6ee"/><rect x="30" y="10" width="5" height="5" fill="#e1e5ee"/><rect x="35" y="10" width="5" height="5" fill="#e1e5ee"/><rect x="40" y="10" width="5" height="5" fill="#c8d2e2"/><rect x="45" y="10" width="5" height="5" fill="#dfe6ee"/><rect x="50" y="10" width="5" height="5" fill="#dfe6ee"/><rect x="55" y="10" width="5" height="5" fill="#dfe6ee"/><rect x="60" y="10" width="5" height="5" fill="#dfe6ee"/><rect x="65" y="10" width="5" height="5" fill="#d9dfea"/><rect x="70" y="10" width="5" height="5" fill="#e1e5ee"/><rect x="75" y="10" width="5" height="5" fill="#e9ecf2"/><rect x="80" y="10" width="5" height="5" fill="#e1e5ee"/><rect x="85" y="10" width="5" height="5" fill="#ced6e5"/><rect x="90" y="10" width="5" height="5" fill="#d9dfea"/><rect x="95" y="10" width="5" height="5" fill="#ced6e5"/><rect x="100" y="10" width="5" height="5" fill="#d9dfea"/><rect x="105" y="10" width="5" height="5" fill="#dfe6ee"/><rect x="110" y="10" width="5" height="5" fill="#c8d2e2"/><rect x="115" y="10" width="5" height="5" fill="#ced6e5"/><rect x="120" y="10" width="5" height="5" fill="#e9ecf2"/><rect x="125" y="10" width="5" height="5" fill="#f1f2f6"/><rect x="130" y="10" width="5" height="5" fill="#e1e5ee"/><rect x="135" y="10" width="5" height="5" fill="#e9ecf2"/><rect x="140" y="10" width="5" height="5" fill="#f1f2f6"/><rect x="145" y="10" width="5" height="5" fill="#d9dfea"/><rect x="150" y="10" width="5" height="5" fill="#e9ecf2"/><rect x="155" y="10" width="5" height="5" fill="#ced6e5"/><rect x="160" y="10" width="5" height="5" fill="#f1f2f6"/><rect x="165" y="10" width="5" height="5" fill="#e1e5ee"/><rect x="170" y="10" width="5" height="5" fill="#c8d2e2"/></svg><svg style="position:absolute;left:120px;top:719px" width="50" height="15" shape-rendering="crispEdges"><rect x="0" y="0" width="5" height="5" fill="#b5c8d8"/><rect x="5" y="0" width="5" height="5" fill="#9fb2d3"/><rect x="10" y="0" width="5" height="5" fill="#c9cfdf"/><rect x="15" y="0" width="5" height="5" fill="#c3d6e3"/><rect x="20" y="0" width="5" height="5" fill="#c5cde0"/><rect x="25" y="0" width="5" height="5" fill="#eef0f4"/><rect x="30" y="0" width="5" height="5" fill="#c3d6e3"/><rect x="35" y="0" width="5" height="5" fill="#9fb2d3"/><rect x="40" y="0" width="5" height="5" fill="#b5c8d8"/><rect x="45" y="0" width="5" height="5" fill="#bcc6d9"/><rect x="0" y="5" width="5" height="5" fill="#f4f4f2"/><rect x="5" y="5" width="5" height="5" fill="#a7bad6"/><rect x="10" y="5" width="5" height="5" fill="#bcc6d9"/><rect x="15" y="5" width="5" height="5" fill="#93aad0"/><rect x="20" y="5" width="5" height="5" fill="#cdd3e2"/><rect x="25" y="5" width="5" height="5" fill="#b5c8d8"/><rect x="30" y="5" width="5" height="5" fill="#b5c8d8"/><rect x="35" y="5" width="5" height="5" fill="#93aad0"/><rect x="40" y="5" width="5" height="5" fill="#b5c8d8"/><rect x="45" y="5" width="5" height="5" fill="#bcc6d9"/><rect x="0" y="10" width="5" height="5" fill="#ced6e5"/><rect x="5" y="10" width="5" height="5" fill="#e9ecf2"/><rect x="10" y="10" width="5" height="5" fill="#f1f2f6"/><rect x="15" y="10" width="5" height="5" fill="#c8d2e2"/><rect x="20" y="10" width="5" height="5" fill="#c8d2e2"/><rect x="25" y="10" width="5" height="5" fill="#c8d2e2"/><rect x="30" y="10" width="5" height="5" fill="#c8d2e2"/><rect x="35" y="10" width="5" height="5" fill="#e9ecf2"/><rect x="40" y="10" width="5" height="5" fill="#c8d2e2"/><rect x="45" y="10" width="5" height="5" fill="#e9ecf2"/></svg><svg style="position:absolute;left:314px;top:684px" width="145" height="20" shape-rendering="crispEdges"><rect x="0" y="0" width="5" height="5" fill="#c9d3e4"/><rect x="5" y="0" width="5" height="5" fill="#bfcbe0"/><rect x="10" y="0" width="5" height="5" fill="#e8ecf3"/><rect x="15" y="0" width="5" height="5" fill="#e8ecf3"/><rect x="20" y="0" width="5" height="5" fill="#eef1f6"/><rect x="25" y="0" width="5" height="5" fill="#c9d3e4"/><rect x="30" y="0" width="5" height="5" fill="#d3dbe8"/><rect x="35" y="0" width="5" height="5" fill="#bfcbe0"/><rect x="40" y="0" width="5" height="5" fill="#dfe5ef"/><rect x="45" y="0" width="5" height="5" fill="#dfe5ef"/><rect x="50" y="0" width="5" height="5" fill="#d3dbe8"/><rect x="55" y="0" width="5" height="5" fill="#c9d3e4"/><rect x="60" y="0" width="5" height="5" fill="#d3dbe8"/><rect x="65" y="0" width="5" height="5" fill="#e8ecf3"/><rect x="70" y="0" width="5" height="5" fill="#bfcbe0"/><rect x="75" y="0" width="5" height="5" fill="#eef1f6"/><rect x="80" y="0" width="5" height="5" fill="#d3dbe8"/><rect x="85" y="0" width="5" height="5" fill="#c9d3e4"/><rect x="90" y="0" width="5" height="5" fill="#bfcbe0"/><rect x="95" y="0" width="5" height="5" fill="#d3dbe8"/><rect x="100" y="0" width="5" height="5" fill="#d3dbe8"/><rect x="105" y="0" width="5" height="5" fill="#dfe5ef"/><rect x="110" y="0" width="5" height="5" fill="#e8ecf3"/><rect x="115" y="0" width="5" height="5" fill="#dfe5ef"/><rect x="120" y="0" width="5" height="5" fill="#e8ecf3"/><rect x="125" y="0" width="5" height="5" fill="#c9d3e4"/><rect x="130" y="0" width="5" height="5" fill="#e8ecf3"/><rect x="135" y="0" width="5" height="5" fill="#d3dbe8"/><rect x="140" y="0" width="5" height="5" fill="#e8ecf3"/><rect x="0" y="5" width="5" height="5" fill="#7d99c6"/><rect x="5" y="5" width="5" height="5" fill="#c3cde0"/><rect x="10" y="5" width="5" height="5" fill="#c3cde0"/><rect x="15" y="5" width="5" height="5" fill="#7590c0"/><rect x="20" y="5" width="5" height="5" fill="#7d99c6"/><rect x="25" y="5" width="5" height="5" fill="#93a7c6"/><rect x="30" y="5" width="5" height="5" fill="#8fa9c9"/><rect x="35" y="5" width="5" height="5" fill="#6a88bd"/><rect x="40" y="5" width="5" height="5" fill="#93a7c6"/><rect x="45" y="5" width="5" height="5" fill="#8aa3cc"/><rect x="50" y="5" width="5" height="5" fill="#93a7c6"/><rect x="55" y="5" width="5" height="5" fill="#8aa3cc"/><rect x="60" y="5" width="5" height="5" fill="#b7c3da"/><rect x="65" y="5" width="5" height="5" fill="#6a88bd"/><rect x="70" y="5" width="5" height="5" fill="#d4dae6"/><rect x="75" y="5" width="5" height="5" fill="#6a88bd"/><rect x="80" y="5" width="5" height="5" fill="#6f8cc0"/><rect x="85" y="5" width="5" height="5" fill="#7d99c6"/><rect x="90" y="5" width="5" height="5" fill="#9fb1d2"/><rect x="95" y="5" width="5" height="5" fill="#b7c3da"/><rect x="100" y="5" width="5" height="5" fill="#6a88bd"/><rect x="105" y="5" width="5" height="5" fill="#93a7c6"/><rect x="110" y="5" width="5" height="5" fill="#8fa9c9"/><rect x="115" y="5" width="5" height="5" fill="#8aa3cc"/><rect x="120" y="5" width="5" height="5" fill="#6a88bd"/><rect x="125" y="5" width="5" height="5" fill="#d4dae6"/><rect x="130" y="5" width="5" height="5" fill="#b7c3da"/><rect x="135" y="5" width="5" height="5" fill="#7d99c6"/><rect x="140" y="5" width="5" height="5" fill="#b7c3da"/><rect x="0" y="10" width="5" height="5" fill="#d4dae6"/><rect x="5" y="10" width="5" height="5" fill="#8aa3cc"/><rect x="10" y="10" width="5" height="5" fill="#d4dae6"/><rect x="15" y="10" width="5" height="5" fill="#9fb1d2"/><rect x="20" y="10" width="5" height="5" fill="#9fb1d2"/><rect x="25" y="10" width="5" height="5" fill="#9fb1d2"/><rect x="30" y="10" width="5" height="5" fill="#7590c0"/><rect x="35" y="10" width="5" height="5" fill="#9fb1d2"/><rect x="40" y="10" width="5" height="5" fill="#c3cde0"/><rect x="45" y="10" width="5" height="5" fill="#7d99c6"/><rect x="50" y="10" width="5" height="5" fill="#6a88bd"/><rect x="55" y="10" width="5" height="5" fill="#93a7c6"/><rect x="60" y="10" width="5" height="5" fill="#9fb1d2"/><rect x="65" y="10" width="5" height="5" fill="#c3cde0"/><rect x="70" y="10" width="5" height="5" fill="#c3cde0"/><rect x="75" y="10" width="5" height="5" fill="#7d99c6"/><rect x="80" y="10" width="5" height="5" fill="#93a7c6"/><rect x="85" y="10" width="5" height="5" fill="#8fa9c9"/><rect x="90" y="10" width="5" height="5" fill="#9fb1d2"/><rect x="95" y="10" width="5" height="5" fill="#5f80b8"/><rect x="100" y="10" width="5" height="5" fill="#5f80b8"/><rect x="105" y="10" width="5" height="5" fill="#9fb1d2"/><rect x="110" y="10" width="5" height="5" fill="#7590c0"/><rect x="115" y="10" width="5" height="5" fill="#7590c0"/><rect x="120" y="10" width="5" height="5" fill="#6a88bd"/><rect x="125" y="10" width="5" height="5" fill="#d4dae6"/><rect x="130" y="10" width="5" height="5" fill="#93a7c6"/><rect x="135" y="10" width="5" height="5" fill="#8aa3cc"/><rect x="140" y="10" width="5" height="5" fill="#5f80b8"/><rect x="0" y="15" width="5" height="5" fill="#bfcbe0"/><rect x="5" y="15" width="5" height="5" fill="#e8ecf3"/><rect x="10" y="15" width="5" height="5" fill="#c9d3e4"/><rect x="15" y="15" width="5" height="5" fill="#e8ecf3"/><rect x="20" y="15" width="5" height="5" fill="#e8ecf3"/><rect x="25" y="15" width="5" height="5" fill="#dfe5ef"/><rect x="30" y="15" width="5" height="5" fill="#d3dbe8"/><rect x="35" y="15" width="5" height="5" fill="#e8ecf3"/><rect x="40" y="15" width="5" height="5" fill="#d3dbe8"/><rect x="45" y="15" width="5" height="5" fill="#eef1f6"/><rect x="50" y="15" width="5" height="5" fill="#e8ecf3"/><rect x="55" y="15" width="5" height="5" fill="#eef1f6"/><rect x="60" y="15" width="5" height="5" fill="#d3dbe8"/><rect x="65" y="15" width="5" height="5" fill="#d3dbe8"/><rect x="70" y="15" width="5" height="5" fill="#eef1f6"/><rect x="75" y="15" width="5" height="5" fill="#c9d3e4"/><rect x="80" y="15" width="5" height="5" fill="#e8ecf3"/><rect x="85" y="15" width="5" height="5" fill="#dfe5ef"/><rect x="90" y="15" width="5" height="5" fill="#bfcbe0"/><rect x="95" y="15" width="5" height="5" fill="#d3dbe8"/><rect x="100" y="15" width="5" height="5" fill="#c9d3e4"/><rect x="105" y="15" width="5" height="5" fill="#bfcbe0"/><rect x="110" y="15" width="5" height="5" fill="#eef1f6"/><rect x="115" y="15" width="5" height="5" fill="#eef1f6"/><rect x="120" y="15" width="5" height="5" fill="#c9d3e4"/><rect x="125" y="15" width="5" height="5" fill="#eef1f6"/><rect x="130" y="15" width="5" height="5" fill="#e8ecf3"/><rect x="135" y="15" width="5" height="5" fill="#eef1f6"/><rect x="140" y="15" width="5" height="5" fill="#e8ecf3"/></svg><svg style="position:absolute;left:314px;top:709px" width="135" height="15" shape-rendering="crispEdges"><rect x="0" y="0" width="5" height="5" fill="#5f80b8"/><rect x="5" y="0" width="5" height="5" fill="#5f80b8"/><rect x="10" y="0" width="5" height="5" fill="#7590c0"/><rect x="15" y="0" width="5" height="5" fill="#7d99c6"/><rect x="20" y="0" width="5" height="5" fill="#6a88bd"/><rect x="25" y="0" width="5" height="5" fill="#9fb1d2"/><rect x="30" y="0" width="5" height="5" fill="#c3cde0"/><rect x="35" y="0" width="5" height="5" fill="#7590c0"/><rect x="40" y="0" width="5" height="5" fill="#6a88bd"/><rect x="45" y="0" width="5" height="5" fill="#6a88bd"/><rect x="50" y="0" width="5" height="5" fill="#9fb1d2"/><rect x="55" y="0" width="5" height="5" fill="#9fb1d2"/><rect x="60" y="0" width="5" height="5" fill="#9fb1d2"/><rect x="65" y="0" width="5" height="5" fill="#7d99c6"/><rect x="70" y="0" width="5" height="5" fill="#c3cde0"/><rect x="75" y="0" width="5" height="5" fill="#d4dae6"/><rect x="80" y="0" width="5" height="5" fill="#8aa3cc"/><rect x="85" y="0" width="5" height="5" fill="#5f80b8"/><rect x="90" y="0" width="5" height="5" fill="#7590c0"/><rect x="95" y="0" width="5" height="5" fill="#8fa9c9"/><rect x="100" y="0" width="5" height="5" fill="#93a7c6"/><rect x="105" y="0" width="5" height="5" fill="#5f80b8"/><rect x="110" y="0" width="5" height="5" fill="#5f80b8"/><rect x="115" y="0" width="5" height="5" fill="#5f80b8"/><rect x="120" y="0" width="5" height="5" fill="#7d99c6"/><rect x="125" y="0" width="5" height="5" fill="#6a88bd"/><rect x="130" y="0" width="5" height="5" fill="#6a88bd"/><rect x="0" y="5" width="5" height="5" fill="#8aa3cc"/><rect x="5" y="5" width="5" height="5" fill="#5f80b8"/><rect x="10" y="5" width="5" height="5" fill="#7590c0"/><rect x="15" y="5" width="5" height="5" fill="#6f8cc0"/><rect x="20" y="5" width="5" height="5" fill="#6f8cc0"/><rect x="25" y="5" width="5" height="5" fill="#a9b8d4"/><rect x="30" y="5" width="5" height="5" fill="#7590c0"/><rect x="35" y="5" width="5" height="5" fill="#6a88bd"/><rect x="40" y="5" width="5" height="5" fill="#8aa3cc"/><rect x="45" y="5" width="5" height="5" fill="#5f80b8"/><rect x="50" y="5" width="5" height="5" fill="#7d99c6"/><rect x="55" y="5" width="5" height="5" fill="#5f80b8"/><rect x="60" y="5" width="5" height="5" fill="#7590c0"/><rect x="65" y="5" width="5" height="5" fill="#6a88bd"/><rect x="70" y="5" width="5" height="5" fill="#8aa3cc"/><rect x="75" y="5" width="5" height="5" fill="#7d99c6"/><rect x="80" y="5" width="5" height="5" fill="#8fa9c9"/><rect x="85" y="5" width="5" height="5" fill="#c3cde0"/><rect x="90" y="5" width="5" height="5" fill="#5f80b8"/><rect x="95" y="5" width="5" height="5" fill="#c3cde0"/><rect x="100" y="5" width="5" height="5" fill="#5f80b8"/><rect x="105" y="5" width="5" height="5" fill="#6f8cc0"/><rect x="110" y="5" width="5" height="5" fill="#d4dae6"/><rect x="115" y="5" width="5" height="5" fill="#a9b8d4"/><rect x="120" y="5" width="5" height="5" fill="#7d99c6"/><rect x="125" y="5" width="5" height="5" fill="#5f80b8"/><rect x="130" y="5" width="5" height="5" fill="#5f80b8"/><rect x="0" y="10" width="5" height="5" fill="#c9d3e4"/><rect x="5" y="10" width="5" height="5" fill="#eef1f6"/><rect x="10" y="10" width="5" height="5" fill="#e8ecf3"/><rect x="15" y="10" width="5" height="5" fill="#bfcbe0"/><rect x="20" y="10" width="5" height="5" fill="#eef1f6"/><rect x="25" y="10" width="5" height="5" fill="#d3dbe8"/><rect x="30" y="10" width="5" height="5" fill="#eef1f6"/><rect x="35" y="10" width="5" height="5" fill="#e8ecf3"/><rect x="40" y="10" width="5" height="5" fill="#c9d3e4"/><rect x="45" y="10" width="5" height="5" fill="#e8ecf3"/><rect x="50" y="10" width="5" height="5" fill="#c9d3e4"/><rect x="55" y="10" width="5" height="5" fill="#dfe5ef"/><rect x="60" y="10" width="5" height="5" fill="#c9d3e4"/><rect x="65" y="10" width="5" height="5" fill="#c9d3e4"/><rect x="70" y="10" width="5" height="5" fill="#d3dbe8"/><rect x="75" y="10" width="5" height="5" fill="#dfe5ef"/><rect x="80" y="10" width="5" height="5" fill="#bfcbe0"/><rect x="85" y="10" width="5" height="5" fill="#e8ecf3"/><rect x="90" y="10" width="5" height="5" fill="#c9d3e4"/><rect x="95" y="10" width="5" height="5" fill="#dfe5ef"/><rect x="100" y="10" width="5" height="5" fill="#e8ecf3"/><rect x="105" y="10" width="5" height="5" fill="#bfcbe0"/><rect x="110" y="10" width="5" height="5" fill="#d3dbe8"/><rect x="115" y="10" width="5" height="5" fill="#dfe5ef"/><rect x="120" y="10" width="5" height="5" fill="#e8ecf3"/><rect x="125" y="10" width="5" height="5" fill="#bfcbe0"/><rect x="130" y="10" width="5" height="5" fill="#bfcbe0"/></svg><div class="t" style="left:315.50px;top:732.00px;line-height:12.5px;color:#c976a6;font-size:12.5px;font-weight:700;transform:scaleX(0.8627);transform-origin:0 0;">Exit</div><div class="t" style="left:510.70px;top:708.00px;line-height:15px;color:#0e3784;font-size:15px;font-weight:400;">firm</div><div class="t" style="left:705.00px;top:698.00px;line-height:15px;color:#0e3784;font-size:15px;font-weight:400;letter-spacing:-0.111px;">01.11.2023, 06:00 -</div><div class="t" style="left:705.00px;top:719.00px;line-height:15px;color:#0e3784;font-size:15px;font-weight:400;letter-spacing:-0.093px;">30.11.2023, 06:00</div><div class="t" style="left:900.00px;top:698.00px;line-height:15px;color:#0e3784;font-size:15px;font-weight:400;letter-spacing:-0.107px;">50,000</div><div class="t" style="left:900.00px;top:721.00px;line-height:12px;color:#0e3784;font-size:12px;font-weight:400;letter-spacing:0.417px;">kWh/h</div><div class="t" style="left:997.50px;top:698.00px;line-height:15px;color:#0e3784;font-size:15px;font-weight:400;letter-spacing:0.216px;">0.25</div><div class="t" style="left:1030.00px;top:700.00px;line-height:12px;color:#0e3784;font-size:12px;font-weight:400;letter-spacing:-0.917px;">EUR /</div><div class="t" style="left:997.50px;top:721.00px;line-height:12px;color:#0e3784;font-size:12px;font-weight:400;letter-spacing:0.417px;">kWh/h</div><div class="t" style="left:1095.00px;top:708.00px;line-height:15px;color:#0e3784;font-size:15px;font-weight:400;letter-spacing:-1.165px;">OTC</div><div class="t" style="left:1192.50px;top:708.00px;line-height:15px;color:#0e3784;font-size:15px;font-weight:400;letter-spacing:-0.062px;">01.11.2023, 16:10</div><div style="position:absolute;left:1582px;top:707.6px;width:14.4px;height:14.4px;border-radius:50%;background:#12c27a;"></div><div class="t" style="left:1601.30px;top:708.00px;line-height:15px;color:#0e3784;font-size:15px;font-weight:400;letter-spacing:-0.337px;">Created</div><div style="position:absolute;left:1780px;top:704px;width:93px;height:24px;border-radius:12px;background:#c8e2f2;"></div><div style="position:absolute;left:1840.5px;top:704px;width:1px;height:24px;background:#ffffff;"></div><div class="t" style="left:1792.00px;top:710.00px;line-height:12px;color:#003a8c;font-size:12px;font-weight:700;transform:scaleX(0.9325);transform-origin:0 0;">Details</div><div style="position:absolute;left:1854px;top:714px;width:0;height:0;border-left:4px solid transparent;border-right:4px solid transparent;border-top:4.5px solid #003a8c;"></div><svg style="position:absolute;left:25px;top:793px" width="80" height="15" shape-rendering="crispEdges"><rect x="0" y="0" width="5" height="5" fill="#c9cfdf"/><rect x="5" y="0" width="5" height="5" fill="#bcc6d9"/><rect x="10" y="0" width="5" height="5" fill="#a7bad6"/><rect x="15" y="0" width="5" height="5" fill="#9fb2d3"/><rect x="20" y="0" width="5" height="5" fill="#f4f4f2"/><rect x="25" y="0" width="5" height="5" fill="#a7bad6"/><rect x="30" y="0" width="5" height="5" fill="#d8dde8"/><rect x="35" y="0" width="5" height="5" fill="#cdd3e2"/><rect x="40" y="0" width="5" height="5" fill="#eef0f4"/><rect x="45" y="0" width="5" height="5" fill="#c5cde0"/><rect x="50" y="0" width="5" height="5" fill="#afbcd6"/><rect x="55" y="0" width="5" height="5" fill="#f4f4f2"/><rect x="60" y="0" width="5" height="5" fill="#d8dde8"/><rect x="65" y="0" width="5" height="5" fill="#a7bad6"/><rect x="70" y="0" width="5" height="5" fill="#c9cfdf"/><rect x="75" y="0" width="5" height="5" fill="#c3d6e3"/><rect x="0" y="5" width="5" height="5" fill="#cdd3e2"/><rect x="5" y="5" width="5" height="5" fill="#a7bad6"/><rect x="10" y="5" width="5" height="5" fill="#eef0f4"/><rect x="15" y="5" width="5" height="5" fill="#afbcd6"/><rect x="20" y="5" width="5" height="5" fill="#b5c8d8"/><rect x="25" y="5" width="5" height="5" fill="#afbcd6"/><rect x="30" y="5" width="5" height="5" fill="#bcc6d9"/><rect x="35" y="5" width="5" height="5" fill="#afbcd6"/><rect x="40" y="5" width="5" height="5" fill="#cdd3e2"/><rect x="45" y="5" width="5" height="5" fill="#bcc6d9"/><rect x="50" y="5" width="5" height="5" fill="#bcc6d9"/><rect x="55" y="5" width="5" height="5" fill="#c5cde0"/><rect x="60" y="5" width="5" height="5" fill="#eef0f4"/><rect x="65" y="5" width="5" height="5" fill="#bcc6d9"/><rect x="70" y="5" width="5" height="5" fill="#b7c2d8"/><rect x="75" y="5" width="5" height="5" fill="#bcc6d9"/><rect x="0" y="10" width="5" height="5" fill="#f1f2f6"/><rect x="5" y="10" width="5" height="5" fill="#dfe6ee"/><rect x="10" y="10" width="5" height="5" fill="#dfe6ee"/><rect x="15" y="10" width="5" height="5" fill="#ced6e5"/><rect x="20" y="10" width="5" height="5" fill="#e1e5ee"/><rect x="25" y="10" width="5" height="5" fill="#dfe6ee"/><rect x="30" y="10" width="5" height="5" fill="#d9dfea"/><rect x="35" y="10" width="5" height="5" fill="#f1f2f6"/><rect x="40" y="10" width="5" height="5" fill="#f1f2f6"/><rect x="45" y="10" width="5" height="5" fill="#d9dfea"/><rect x="50" y="10" width="5" height="5" fill="#f1f2f6"/><rect x="55" y="10" width="5" height="5" fill="#e1e5ee"/><rect x="60" y="10" width="5" height="5" fill="#e1e5ee"/><rect x="65" y="10" width="5" height="5" fill="#c8d2e2"/><rect x="70" y="10" width="5" height="5" fill="#e9ecf2"/><rect x="75" y="10" width="5" height="5" fill="#e1e5ee"/></svg><svg style="position:absolute;left:25px;top:813px" width="80" height="15" shape-rendering="crispEdges"><rect x="0" y="0" width="5" height="5" fill="#c5cde0"/><rect x="5" y="0" width="5" height="5" fill="#9fb2d3"/><rect x="10" y="0" width="5" height="5" fill="#9fb2d3"/><rect x="15" y="0" width="5" height="5" fill="#b7c2d8"/><rect x="20" y="0" width="5" height="5" fill="#f4f4f2"/><rect x="25" y="0" width="5" height="5" fill="#93aad0"/><rect x="30" y="0" width="5" height="5" fill="#a7bad6"/><rect x="35" y="0" width="5" height="5" fill="#9fb2d3"/><rect x="40" y="0" width="5" height="5" fill="#93aad0"/><rect x="45" y="0" width="5" height="5" fill="#a7bad6"/><rect x="50" y="0" width="5" height="5" fill="#c3d6e3"/><rect x="55" y="0" width="5" height="5" fill="#afbcd6"/><rect x="60" y="0" width="5" height="5" fill="#c3d6e3"/><rect x="65" y="0" width="5" height="5" fill="#f4f4f2"/><rect x="70" y="0" width="5" height="5" fill="#c9cfdf"/><rect x="75" y="0" width="5" height="5" fill="#c3d6e3"/><rect x="0" y="5" width="5" height="5" fill="#9fb2d3"/><rect x="5" y="5" width="5" height="5" fill="#afbcd6"/><rect x="10" y="5" width="5" height="5" fill="#a7bad6"/><rect x="15" y="5" width="5" height="5" fill="#b5c8d8"/><rect x="20" y="5" width="5" height="5" fill="#f4f4f2"/><rect x="25" y="5" width="5" height="5" fill="#b5c8d8"/><rect x="30" y="5" width="5" height="5" fill="#a3b3d2"/><rect x="35" y="5" width="5" height="5" fill="#d8dde8"/><rect x="40" y="5" width="5" height="5" fill="#eef0f4"/><rect x="45" y="5" width="5" height="5" fill="#bcc6d9"/><rect x="50" y="5" width="5" height="5" fill="#c5cde0"/><rect x="55" y="5" width="5" height="5" fill="#9fb2d3"/><rect x="60" y="5" width="5" height="5" fill="#b7c2d8"/><rect x="65" y="5" width="5" height="5" fill="#93aad0"/><rect x="70" y="5" width="5" height="5" fill="#eef0f4"/><rect x="75" y="5" width="5" height="5" fill="#a7bad6"/><rect x="0" y="10" width="5" height="5" fill="#dfe6ee"/><rect x="5" y="10" width="5" height="5" fill="#e1e5ee"/><rect x="10" y="10" width="5" height="5" fill="#d9dfea"/><rect x="15" y="10" width="5" height="5" fill="#e1e5ee"/><rect x="20" y="10" width="5" height="5" fill="#ced6e5"/><rect x="25" y="10" width="5" height="5" fill="#e1e5ee"/><rect x="30" y="10" width="5" height="5" fill="#c8d2e2"/><rect x="35" y="10" width="5" height="5" fill="#d9dfea"/><rect x="40" y="10" width="5" height="5" fill="#e1e5ee"/><rect x="45" y="10" width="5" height="5" fill="#f1f2f6"/><rect x="50" y="10" width="5" height="5" fill="#c8d2e2"/><rect x="55" y="10" width="5" height="5" fill="#e9ecf2"/><rect x="60" y="10" width="5" height="5" fill="#e1e5ee"/><rect x="65" y="10" width="5" height="5" fill="#d9dfea"/><rect x="70" y="10" width="5" height="5" fill="#c8d2e2"/><rect x="75" y="10" width="5" height="5" fill="#e1e5ee"/></svg><svg style="position:absolute;left:25px;top:838px" width="75" height="15" shape-rendering="crispEdges"><rect x="0" y="0" width="5" height="5" fill="#d8dde8"/><rect x="5" y="0" width="5" height="5" fill="#b7c2d8"/><rect x="10" y="0" width="5" height="5" fill="#bcc6d9"/><rect x="15" y="0" width="5" height="5" fill="#b5c8d8"/><rect x="20" y="0" width="5" height="5" fill="#afbcd6"/><rect x="25" y="0" width="5" height="5" fill="#f4f4f2"/><rect x="30" y="0" width="5" height="5" fill="#f4f4f2"/><rect x="35" y="0" width="5" height="5" fill="#9fb2d3"/><rect x="40" y="0" width="5" height="5" fill="#a3b3d2"/><rect x="45" y="0" width="5" height="5" fill="#a7bad6"/><rect x="50" y="0" width="5" height="5" fill="#b7c2d8"/><rect x="55" y="0" width="5" height="5" fill="#b5c8d8"/><rect x="60" y="0" width="5" height="5" fill="#eef0f4"/><rect x="65" y="0" width="5" height="5" fill="#cdd3e2"/><rect x="70" y="0" width="5" height="5" fill="#c5cde0"/><rect x="0" y="5" width="5" height="5" fill="#a7bad6"/><rect x="5" y="5" width="5" height="5" fill="#9fb2d3"/><rect x="10" y="5" width="5" height="5" fill="#b7c2d8"/><rect x="15" y="5" width="5" height="5" fill="#a7bad6"/><rect x="20" y="5" width="5" height="5" fill="#cdd3e2"/><rect x="25" y="5" width="5" height="5" fill="#f4f4f2"/><rect x="30" y="5" width="5" height="5" fill="#9fb2d3"/><rect x="35" y="5" width="5" height="5" fill="#c9cfdf"/><rect x="40" y="5" width="5" height="5" fill="#9fb2d3"/><rect x="45" y="5" width="5" height="5" fill="#b5c8d8"/><rect x="50" y="5" width="5" height="5" fill="#93aad0"/><rect x="55" y="5" width="5" height="5" fill="#cdd3e2"/><rect x="60" y="5" width="5" height="5" fill="#9fb2d3"/><rect x="65" y="5" width="5" height="5" fill="#d8dde8"/><rect x="70" y="5" width="5" height="5" fill="#b5c8d8"/><rect x="0" y="10" width="5" height="5" fill="#ced6e5"/><rect x="5" y="10" width="5" height="5" fill="#e9ecf2"/><rect x="10" y="10" width="5" height="5" fill="#d9dfea"/><rect x="15" y="10" width="5" height="5" fill="#d9dfea"/><rect x="20" y="10" width="5" height="5" fill="#c8d2e2"/><rect x="25" y="10" width="5" height="5" fill="#e1e5ee"/><rect x="30" y="10" width="5" height="5" fill="#d9dfea"/><rect x="35" y="10" width="5" height="5" fill="#e1e5ee"/><rect x="40" y="10" width="5" height="5" fill="#e1e5ee"/><rect x="45" y="10" width="5" height="5" fill="#e1e5ee"/><rect x="50" y="10" width="5" height="5" fill="#ced6e5"/><rect x="55" y="10" width="5" height="5" fill="#f1f2f6"/><rect x="60" y="10" width="5" height="5" fill="#f1f2f6"/><rect x="65" y="10" width="5" height="5" fill="#e9ecf2"/><rect x="70" y="10" width="5" height="5" fill="#f1f2f6"/></svg><svg style="position:absolute;left:25px;top:858px" width="65" height="15" shape-rendering="crispEdges"><rect x="0" y="0" width="5" height="5" fill="#d8dde8"/><rect x="5" y="0" width="5" height="5" fill="#cdd3e2"/><rect x="10" y="0" width="5" height="5" fill="#f4f4f2"/><rect x="15" y="0" width="5" height="5" fill="#d8dde8"/><rect x="20" y="0" width="5" height="5" fill="#c5cde0"/><rect x="25" y="0" width="5" height="5" fill="#c9cfdf"/><rect x="30" y="0" width="5" height="5" fill="#c3d6e3"/><rect x="35" y="0" width="5" height="5" fill="#c9cfdf"/><rect x="40" y="0" width="5" height="5" fill="#afbcd6"/><rect x="45" y="0" width="5" height="5" fill="#c9cfdf"/><rect x="50" y="0" width="5" height="5" fill="#d8dde8"/><rect x="55" y="0" width="5" height="5" fill="#b5c8d8"/><rect x="60" y="0" width="5" height="5" fill="#c3d6e3"/><rect x="0" y="5" width="5" height="5" fill="#f4f4f2"/><rect x="5" y="5" width="5" height="5" fill="#afbcd6"/><rect x="10" y="5" width="5" height="5" fill="#b5c8d8"/><rect x="15" y="5" width="5" height="5" fill="#9fb2d3"/><rect x="20" y="5" width="5" height="5" fill="#eef0f4"/><rect x="25" y="5" width="5" height="5" fill="#cdd3e2"/><rect x="30" y="5" width="5" height="5" fill="#cdd3e2"/><rect x="35" y="5" width="5" height="5" fill="#bcc6d9"/><rect x="40" y="5" width="5" height="5" fill="#cdd3e2"/><rect x="45" y="5" width="5" height="5" fill="#c3d6e3"/><rect x="50" y="5" width="5" height="5" fill="#f4f4f2"/><rect x="55" y="5" width="5" height="5" fill="#eef0f4"/><rect x="60" y="5" width="5" height="5" fill="#eef0f4"/><rect x="0" y="10" width="5" height="5" fill="#ced6e5"/><rect x="5" y="10" width="5" height="5" fill="#e9ecf2"/><rect x="10" y="10" width="5" height="5" fill="#dfe6ee"/><rect x="15" y="10" width="5" height="5" fill="#d9dfea"/><rect x="20" y="10" width="5" height="5" fill="#e1e5ee"/><rect x="25" y="10" width="5" height="5" fill="#c8d2e2"/><rect x="30" y="10" width="5" height="5" fill="#e9ecf2"/><rect x="35" y="10" width="5" height="5" fill="#e1e5ee"/><rect x="40" y="10" width="5" height="5" fill="#e1e5ee"/><rect x="45" y="10" width="5" height="5" fill="#ced6e5"/><rect x="50" y="10" width="5" height="5" fill="#ced6e5"/><rect x="55" y="10" width="5" height="5" fill="#d9dfea"/><rect x="60" y="10" width="5" height="5" fill="#dfe6ee"/></svg><svg style="position:absolute;left:118px;top:824px" width="115" height="20" shape-rendering="crispEdges"><rect x="0" y="0" width="5" height="5" fill="#e9ecf2"/><rect x="5" y="0" width="5" height="5" fill="#e1e5ee"/><rect x="10" y="0" width="5" height="5" fill="#e1e5ee"/><rect x="15" y="0" width="5" height="5" fill="#ced6e5"/><rect x="20" y="0" width="5" height="5" fill="#c8d2e2"/><rect x="25" y="0" width="5" height="5" fill="#dfe6ee"/><rect x="30" y="0" width="5" height="5" fill="#c8d2e2"/><rect x="35" y="0" width="5" height="5" fill="#f1f2f6"/><rect x="40" y="0" width="5" height="5" fill="#ced6e5"/><rect x="45" y="0" width="5" height="5" fill="#d9dfea"/><rect x="50" y="0" width="5" height="5" fill="#f1f2f6"/><rect x="55" y="0" width="5" height="5" fill="#e9ecf2"/><rect x="60" y="0" width="5" height="5" fill="#ced6e5"/><rect x="65" y="0" width="5" height="5" fill="#d9dfea"/><rect x="70" y="0" width="5" height="5" fill="#e1e5ee"/><rect x="75" y="0" width="5" height="5" fill="#dfe6ee"/><rect x="80" y="0" width="5" height="5" fill="#e9ecf2"/><rect x="85" y="0" width="5" height="5" fill="#e9ecf2"/><rect x="90" y="0" width="5" height="5" fill="#d9dfea"/><rect x="95" y="0" width="5" height="5" fill="#dfe6ee"/><rect x="100" y="0" width="5" height="5" fill="#e1e5ee"/><rect x="105" y="0" width="5" height="5" fill="#d9dfea"/><rect x="110" y="0" width="5" height="5" fill="#d9dfea"/><rect x="0" y="5" width="5" height="5" fill="#bcc6d9"/><rect x="5" y="5" width="5" height="5" fill="#b5c8d8"/><rect x="10" y="5" width="5" height="5" fill="#bcc6d9"/><rect x="15" y="5" width="5" height="5" fill="#cdd3e2"/><rect x="20" y="5" width="5" height="5" fill="#b7c2d8"/><rect x="25" y="5" width="5" height="5" fill="#f4f4f2"/><rect x="30" y="5" width="5" height="5" fill="#9fb2d3"/><rect x="35" y="5" width="5" height="5" fill="#cdd3e2"/><rect x="40" y="5" width="5" height="5" fill="#bcc6d9"/><rect x="45" y="5" width="5" height="5" fill="#a7bad6"/><rect x="50" y="5" width="5" height="5" fill="#b7c2d8"/><rect x="55" y="5" width="5" height="5" fill="#bcc6d9"/><rect x="60" y="5" width="5" height="5" fill="#afbcd6"/><rect x="65" y="5" width="5" height="5" fill="#c5cde0"/><rect x="70" y="5" width="5" height="5" fill="#d8dde8"/><rect x="75" y="5" width="5" height="5" fill="#9fb2d3"/><rect x="80" y="5" width="5" height="5" fill="#b5c8d8"/><rect x="85" y="5" width="5" height="5" fill="#c9cfdf"/><rect x="90" y="5" width="5" height="5" fill="#cdd3e2"/><rect x="95" y="5" width="5" height="5" fill="#cdd3e2"/><rect x="100" y="5" width="5" height="5" fill="#b5c8d8"/><rect x="105" y="5" width="5" height="5" fill="#93aad0"/><rect x="110" y="5" width="5" height="5" fill="#b7c2d8"/><rect x="0" y="10" width="5" height="5" fill="#c5cde0"/><rect x="5" y="10" width="5" height="5" fill="#9fb2d3"/><rect x="10" y="10" width="5" height="5" fill="#c3d6e3"/><rect x="15" y="10" width="5" height="5" fill="#c5cde0"/><rect x="20" y="10" width="5" height="5" fill="#a7bad6"/><rect x="25" y="10" width="5" height="5" fill="#afbcd6"/><rect x="30" y="10" width="5" height="5" fill="#a3b3d2"/><rect x="35" y="10" width="5" height="5" fill="#b7c2d8"/><rect x="40" y="10" width="5" height="5" fill="#afbcd6"/><rect x="45" y="10" width="5" height="5" fill="#b7c2d8"/><rect x="50" y="10" width="5" height="5" fill="#9fb2d3"/><rect x="55" y="10" width="5" height="5" fill="#9fb2d3"/><rect x="60" y="10" width="5" height="5" fill="#c9cfdf"/><rect x="65" y="10" width="5" height="5" fill="#cdd3e2"/><rect x="70" y="10" width="5" height="5" fill="#c5cde0"/><rect x="75" y="10" width="5" height="5" fill="#a3b3d2"/><rect x="80" y="10" width="5" height="5" fill="#b5c8d8"/><rect x="85" y="10" width="5" height="5" fill="#c3d6e3"/><rect x="90" y="10" width="5" height="5" fill="#93aad0"/><rect x="95" y="10" width="5" height="5" fill="#a7bad6"/><rect x="100" y="10" width="5" height="5" fill="#c9cfdf"/><rect x="105" y="10" width="5" height="5" fill="#f4f4f2"/><rect x="110" y="10" width="5" height="5" fill="#eef0f4"/><rect x="0" y="15" width="5" height="5" fill="#c8d2e2"/><rect x="5" y="15" width="5" height="5" fill="#f1f2f6"/><rect x="10" y="15" width="5" height="5" fill="#dfe6ee"/><rect x="15" y="15" width="5" height="5" fill="#c8d2e2"/><rect x="20" y="15" width="5" height="5" fill="#d9dfea"/><rect x="25" y="15" width="5" height="5" fill="#ced6e5"/><rect x="30" y="15" width="5" height="5" fill="#dfe6ee"/><rect x="35" y="15" width="5" height="5" fill="#e9ecf2"/><rect x="40" y="15" width="5" height="5" fill="#d9dfea"/><rect x="45" y="15" width="5" height="5" fill="#ced6e5"/><rect x="50" y="15" width="5" height="5" fill="#f1f2f6"/><rect x="55" y="15" width="5" height="5" fill="#ced6e5"/><rect x="60" y="15" width="5" height="5" fill="#e9ecf2"/><rect x="65" y="15" width="5" height="5" fill="#e1e5ee"/><rect x="70" y="15" width="5" height="5" fill="#c8d2e2"/><rect x="75" y="15" width="5" height="5" fill="#c8d2e2"/><rect x="80" y="15" width="5" height="5" fill="#ced6e5"/><rect x="85" y="15" width="5" height="5" fill="#f1f2f6"/><rect x="90" y="15" width="5" height="5" fill="#ced6e5"/><rect x="95" y="15" width="5" height="5" fill="#dfe6ee"/><rect x="100" y="15" width="5" height="5" fill="#ced6e5"/><rect x="105" y="15" width="5" height="5" fill="#ced6e5"/><rect x="110" y="15" width="5" height="5" fill="#c8d2e2"/></svg><svg style="position:absolute;left:313px;top:815px" width="90" height="15" shape-rendering="crispEdges"><rect x="0" y="0" width="5" height="5" fill="#5f80b8"/><rect x="5" y="0" width="5" height="5" fill="#9fb1d2"/><rect x="10" y="0" width="5" height="5" fill="#5f80b8"/><rect x="15" y="0" width="5" height="5" fill="#6a88bd"/><rect x="20" y="0" width="5" height="5" fill="#5f80b8"/><rect x="25" y="0" width="5" height="5" fill="#c3cde0"/><rect x="30" y="0" width="5" height="5" fill="#6a88bd"/><rect x="35" y="0" width="5" height="5" fill="#7590c0"/><rect x="40" y="0" width="5" height="5" fill="#93a7c6"/><rect x="45" y="0" width="5" height="5" fill="#c3cde0"/><rect x="50" y="0" width="5" height="5" fill="#6a88bd"/><rect x="55" y="0" width="5" height="5" fill="#d4dae6"/><rect x="60" y="0" width="5" height="5" fill="#93a7c6"/><rect x="65" y="0" width="5" height="5" fill="#d4dae6"/><rect x="70" y="0" width="5" height="5" fill="#93a7c6"/><rect x="75" y="0" width="5" height="5" fill="#6f8cc0"/><rect x="80" y="0" width="5" height="5" fill="#8aa3cc"/><rect x="85" y="0" width="5" height="5" fill="#7590c0"/><rect x="0" y="5" width="5" height="5" fill="#7590c0"/><rect x="5" y="5" width="5" height="5" fill="#9fb1d2"/><rect x="10" y="5" width="5" height="5" fill="#93a7c6"/><rect x="15" y="5" width="5" height="5" fill="#8fa9c9"/><rect x="20" y="5" width="5" height="5" fill="#8aa3cc"/><rect x="25" y="5" width="5" height="5" fill="#b7c3da"/><rect x="30" y="5" width="5" height="5" fill="#7d99c6"/><rect x="35" y="5" width="5" height="5" fill="#5f80b8"/><rect x="40" y="5" width="5" height="5" fill="#7590c0"/><rect x="45" y="5" width="5" height="5" fill="#93a7c6"/><rect x="50" y="5" width="5" height="5" fill="#7590c0"/><rect x="55" y="5" width="5" height="5" fill="#93a7c6"/><rect x="60" y="5" width="5" height="5" fill="#5f80b8"/><rect x="65" y="5" width="5" height="5" fill="#93a7c6"/><rect x="70" y="5" width="5" height="5" fill="#6f8cc0"/><rect x="75" y="5" width="5" height="5" fill="#7d99c6"/><rect x="80" y="5" width="5" height="5" fill="#a9b8d4"/><rect x="85" y="5" width="5" height="5" fill="#7590c0"/><rect x="0" y="10" width="5" height="5" fill="#c9d3e4"/><rect x="5" y="10" width="5" height="5" fill="#dfe5ef"/><rect x="10" y="10" width="5" height="5" fill="#bfcbe0"/><rect x="15" y="10" width="5" height="5" fill="#eef1f6"/><rect x="20" y="10" width="5" height="5" fill="#eef1f6"/><rect x="25" y="10" width="5" height="5" fill="#dfe5ef"/><rect x="30" y="10" width="5" height="5" fill="#bfcbe0"/><rect x="35" y="10" width="5" height="5" fill="#eef1f6"/><rect x="40" y="10" width="5" height="5" fill="#dfe5ef"/><rect x="45" y="10" width="5" height="5" fill="#bfcbe0"/><rect x="50" y="10" width="5" height="5" fill="#bfcbe0"/><rect x="55" y="10" width="5" height="5" fill="#c9d3e4"/><rect x="60" y="10" width="5" height="5" fill="#d3dbe8"/><rect x="65" y="10" width="5" height="5" fill="#dfe5ef"/><rect x="70" y="10" width="5" height="5" fill="#d3dbe8"/><rect x="75" y="10" width="5" height="5" fill="#e8ecf3"/><rect x="80" y="10" width="5" height="5" fill="#bfcbe0"/><rect x="85" y="10" width="5" height="5" fill="#e8ecf3"/></svg><div class="t" style="left:316.00px;top:839.00px;line-height:12.5px;color:#5aa2d8;font-size:12.5px;font-weight:700;transform:scaleX(0.8531);transform-origin:0 0;">Entry</div><div class="t" style="left:509.70px;top:826.00px;line-height:15px;color:#0e3784;font-size:15px;font-weight:400;letter-spacing:-0.163px;">FZK</div><div class="t" style="left:705.00px;top:815.00px;line-height:15px;color:#0e3784;font-size:15px;font-weight:400;letter-spacing:-0.173px;">01.10.2023, 06:00 -</div><div class="t" style="left:705.00px;top:837.00px;line-height:15px;color:#0e3784;font-size:15px;font-weight:400;letter-spacing:-0.093px;">01.11.2023, 06:00</div><div class="t" style="left:900.00px;top:826.00px;line-height:15px;color:#0e3784;font-size:15px;font-weight:400;">5</div><div class="t" style="left:912.00px;top:829.00px;line-height:12px;color:#0e3784;font-size:12px;font-weight:400;letter-spacing:0.417px;">kWh/h</div><div class="t" style="left:997.50px;top:815.00px;line-height:15px;color:#0e3784;font-size:15px;font-weight:400;letter-spacing:0.245px;">1.5</div><div class="t" style="left:1022.00px;top:817.00px;line-height:12px;color:#0e3784;font-size:12px;font-weight:400;letter-spacing:-0.917px;">EUR /</div><div class="t" style="left:997.50px;top:839.00px;line-height:12px;color:#0e3784;font-size:12px;font-weight:400;letter-spacing:0.417px;">kWh/h</div><div class="t" style="left:1094.80px;top:826.00px;line-height:15px;color:#0e3784;font-size:15px;font-weight:400;letter-spacing:-1.053px;">FCFS</div><div class="t" style="left:1192.50px;top:826.00px;line-height:15px;color:#0e3784;font-size:15px;font-weight:400;letter-spacing:-0.062px;">01.10.2023, 11:16</div><div style="position:absolute;left:1582px;top:825.6px;width:14.4px;height:14.4px;border-radius:50%;background:#12c27a;"></div><div class="t" style="left:1601.30px;top:826.00px;line-height:15px;color:#0e3784;font-size:15px;font-weight:400;letter-spacing:-0.337px;">Created</div><div style="position:absolute;left:1780px;top:822px;width:93px;height:24px;border-radius:12px;background:#c8e2f2;"></div><div style="position:absolute;left:1840.5px;top:822px;width:1px;height:24px;background:#ffffff;"></div><div class="t" style="left:1792.00px;top:828.00px;line-height:12px;color:#003a8c;font-size:12px;font-weight:700;transform:scaleX(0.9325);transform-origin:0 0;">Details</div><div style="position:absolute;left:1854px;top:832px;width:0;height:0;border-left:4px solid transparent;border-right:4px solid transparent;border-top:4.5px solid #003a8c;"></div><svg style="position:absolute;left:22px;top:913px" width="80" height="15" shape-rendering="crispEdges"><rect x="0" y="0" width="5" height="5" fill="#cdd3e2"/><rect x="5" y="0" width="5" height="5" fill="#eef0f4"/><rect x="10" y="0" width="5" height="5" fill="#c9cfdf"/><rect x="15" y="0" width="5" height="5" fill="#d8dde8"/><rect x="20" y="0" width="5" height="5" fill="#d8dde8"/><rect x="25" y="0" width="5" height="5" fill="#c3d6e3"/><rect x="30" y="0" width="5" height="5" fill="#afbcd6"/><rect x="35" y="0" width="5" height="5" fill="#c5cde0"/><rect x="40" y="0" width="5" height="5" fill="#d8dde8"/><rect x="45" y="0" width="5" height="5" fill="#f4f4f2"/><rect x="50" y="0" width="5" height="5" fill="#c9cfdf"/><rect x="55" y="0" width="5" height="5" fill="#9fb2d3"/><rect x="60" y="0" width="5" height="5" fill="#93aad0"/><rect x="65" y="0" width="5" height="5" fill="#b7c2d8"/><rect x="70" y="0" width="5" height="5" fill="#a3b3d2"/><rect x="75" y="0" width="5" height="5" fill="#c9cfdf"/><rect x="0" y="5" width="5" height="5" fill="#c9cfdf"/><rect x="5" y="5" width="5" height="5" fill="#cdd3e2"/><rect x="10" y="5" width="5" height="5" fill="#c5cde0"/><rect x="15" y="5" width="5" height="5" fill="#a3b3d2"/><rect x="20" y="5" width="5" height="5" fill="#a7bad6"/><rect x="25" y="5" width="5" height="5" fill="#bcc6d9"/><rect x="30" y="5" width="5" height="5" fill="#9fb2d3"/><rect x="35" y="5" width="5" height="5" fill="#c9cfdf"/><rect x="40" y="5" width="5" height="5" fill="#eef0f4"/><rect x="45" y="5" width="5" height="5" fill="#eef0f4"/><rect x="50" y="5" width="5" height="5" fill="#9fb2d3"/><rect x="55" y="5" width="5" height="5" fill="#a3b3d2"/><rect x="60" y="5" width="5" height="5" fill="#a3b3d2"/><rect x="65" y="5" width="5" height="5" fill="#a7bad6"/><rect x="70" y="5" width="5" height="5" fill="#b7c2d8"/><rect x="75" y="5" width="5" height="5" fill="#d8dde8"/><rect x="0" y="10" width="5" height="5" fill="#e1e5ee"/><rect x="5" y="10" width="5" height="5" fill="#dfe6ee"/><rect x="10" y="10" width="5" height="5" fill="#d9dfea"/><rect x="15" y="10" width="5" height="5" fill="#ced6e5"/><rect x="20" y="10" width="5" height="5" fill="#e1e5ee"/><rect x="25" y="10" width="5" height="5" fill="#ced6e5"/><rect x="30" y="10" width="5" height="5" fill="#e9ecf2"/><rect x="35" y="10" width="5" height="5" fill="#ced6e5"/><rect x="40" y="10" width="5" height="5" fill="#dfe6ee"/><rect x="45" y="10" width="5" height="5" fill="#d9dfea"/><rect x="50" y="10" width="5" height="5" fill="#ced6e5"/><rect x="55" y="10" width="5" height="5" fill="#f1f2f6"/><rect x="60" y="10" width="5" height="5" fill="#d9dfea"/><rect x="65" y="10" width="5" height="5" fill="#dfe6ee"/><rect x="70" y="10" width="5" height="5" fill="#dfe6ee"/><rect x="75" y="10" width="5" height="5" fill="#dfe6ee"/></svg><svg style="position:absolute;left:22px;top:932px" width="80" height="15" shape-rendering="crispEdges"><rect x="0" y="0" width="5" height="5" fill="#93aad0"/><rect x="5" y="0" width="5" height="5" fill="#c5cde0"/><rect x="10" y="0" width="5" height="5" fill="#f4f4f2"/><rect x="15" y="0" width="5" height="5" fill="#b5c8d8"/><rect x="20" y="0" width="5" height="5" fill="#cdd3e2"/><rect x="25" y="0" width="5" height="5" fill="#9fb2d3"/><rect x="30" y="0" width="5" height="5" fill="#c5cde0"/><rect x="35" y="0" width="5" height="5" fill="#f4f4f2"/><rect x="40" y="0" width="5" height="5" fill="#d8dde8"/><rect x="45" y="0" width="5" height="5" fill="#b7c2d8"/><rect x="50" y="0" width="5" height="5" fill="#9fb2d3"/><rect x="55" y="0" width="5" height="5" fill="#d8dde8"/><rect x="60" y="0" width="5" height="5" fill="#c5cde0"/><rect x="65" y="0" width="5" height="5" fill="#c3d6e3"/><rect x="70" y="0" width="5" height="5" fill="#b5c8d8"/><rect x="75" y="0" width="5" height="5" fill="#d8dde8"/><rect x="0" y="5" width="5" height="5" fill="#9fb2d3"/><rect x="5" y="5" width="5" height="5" fill="#afbcd6"/><rect x="10" y="5" width="5" height="5" fill="#cdd3e2"/><rect x="15" y="5" width="5" height="5" fill="#f4f4f2"/><rect x="20" y="5" width="5" height="5" fill="#f4f4f2"/><rect x="25" y="5" width="5" height="5" fill="#cdd3e2"/><rect x="30" y="5" width="5" height="5" fill="#c5cde0"/><rect x="35" y="5" width="5" height="5" fill="#a3b3d2"/><rect x="40" y="5" width="5" height="5" fill="#c5cde0"/><rect x="45" y="5" width="5" height="5" fill="#a7bad6"/><rect x="50" y="5" width="5" height="5" fill="#eef0f4"/><rect x="55" y="5" width="5" height="5" fill="#b5c8d8"/><rect x="60" y="5" width="5" height="5" fill="#9fb2d3"/><rect x="65" y="5" width="5" height="5" fill="#bcc6d9"/><rect x="70" y="5" width="5" height="5" fill="#a7bad6"/><rect x="75" y="5" width="5" height="5" fill="#a3b3d2"/><rect x="0" y="10" width="5" height="5" fill="#c8d2e2"/><rect x="5" y="10" width="5" height="5" fill="#ced6e5"/><rect x="10" y="10" width="5" height="5" fill="#f1f2f6"/><rect x="15" y="10" width="5" height="5" fill="#d9dfea"/><rect x="20" y="10" width="5" height="5" fill="#e1e5ee"/><rect x="25" y="10" width="5" height="5" fill="#ced6e5"/><rect x="30" y="10" width="5" height="5" fill="#d9dfea"/><rect x="35" y="10" width="5" height="5" fill="#e9ecf2"/><rect x="40" y="10" width="5" height="5" fill="#dfe6ee"/><rect x="45" y="10" width="5" height="5" fill="#dfe6ee"/><rect x="50" y="10" width="5" height="5" fill="#dfe6ee"/><rect x="55" y="10" width="5" height="5" fill="#e1e5ee"/><rect x="60" y="10" width="5" height="5" fill="#e9ecf2"/><rect x="65" y="10" width="5" height="5" fill="#e1e5ee"/><rect x="70" y="10" width="5" height="5" fill="#dfe6ee"/><rect x="75" y="10" width="5" height="5" fill="#ced6e5"/></svg><svg style="position:absolute;left:22px;top:952px" width="80" height="15" shape-rendering="crispEdges"><rect x="0" y="0" width="5" height="5" fill="#d8dde8"/><rect x="5" y="0" width="5" height="5" fill="#afbcd6"/><rect x="10" y="0" width="5" height="5" fill="#9fb2d3"/><rect x="15" y="0" width="5" height="5" fill="#eef0f4"/><rect x="20" y="0" width="5" height="5" fill="#a7bad6"/><rect x="25" y="0" width="5" height="5" fill="#afbcd6"/><rect x="30" y="0" width="5" height="5" fill="#bcc6d9"/><rect x="35" y="0" width="5" height="5" fill="#afbcd6"/><rect x="40" y="0" width="5" height="5" fill="#bcc6d9"/><rect x="45" y="0" width="5" height="5" fill="#c5cde0"/><rect x="50" y="0" width="5" height="5" fill="#c3d6e3"/><rect x="55" y="0" width="5" height="5" fill="#bcc6d9"/><rect x="60" y="0" width="5" height="5" fill="#b7c2d8"/><rect x="65" y="0" width="5" height="5" fill="#bcc6d9"/><rect x="70" y="0" width="5" height="5" fill="#93aad0"/><rect x="75" y="0" width="5" height="5" fill="#bcc6d9"/><rect x="0" y="5" width="5" height="5" fill="#c3d6e3"/><rect x="5" y="5" width="5" height="5" fill="#afbcd6"/><rect x="10" y="5" width="5" height="5" fill="#c5cde0"/><rect x="15" y="5" width="5" height="5" fill="#f4f4f2"/><rect x="20" y="5" width="5" height="5" fill="#cdd3e2"/><rect x="25" y="5" width="5" height="5" fill="#eef0f4"/><rect x="30" y="5" width="5" height="5" fill="#b7c2d8"/><rect x="35" y="5" width="5" height="5" fill="#f4f4f2"/><rect x="40" y="5" width="5" height="5" fill="#eef0f4"/><rect x="45" y="5" width="5" height="5" fill="#9fb2d3"/><rect x="50" y="5" width="5" height="5" fill="#9fb2d3"/><rect x="55" y="5" width="5" height="5" fill="#bcc6d9"/><rect x="60" y="5" width="5" height="5" fill="#c5cde0"/><rect x="65" y="5" width="5" height="5" fill="#afbcd6"/><rect x="70" y="5" width="5" height="5" fill="#afbcd6"/><rect x="75" y="5" width="5" height="5" fill="#c3d6e3"/><rect x="0" y="10" width="5" height="5" fill="#f1f2f6"/><rect x="5" y="10" width="5" height="5" fill="#e1e5ee"/><rect x="10" y="10" width="5" height="5" fill="#d9dfea"/><rect x="15" y="10" width="5" height="5" fill="#dfe6ee"/><rect x="20" y="10" width="5" height="5" fill="#c8d2e2"/><rect x="25" y="10" width="5" height="5" fill="#d9dfea"/><rect x="30" y="10" width="5" height="5" fill="#c8d2e2"/><rect x="35" y="10" width="5" height="5" fill="#e1e5ee"/><rect x="40" y="10" width="5" height="5" fill="#d9dfea"/><rect x="45" y="10" width="5" height="5" fill="#e1e5ee"/><rect x="50" y="10" width="5" height="5" fill="#e1e5ee"/><rect x="55" y="10" width="5" height="5" fill="#c8d2e2"/><rect x="60" y="10" width="5" height="5" fill="#ced6e5"/><rect x="65" y="10" width="5" height="5" fill="#d9dfea"/><rect x="70" y="10" width="5" height="5" fill="#ced6e5"/><rect x="75" y="10" width="5" height="5" fill="#e9ecf2"/></svg><svg style="position:absolute;left:22px;top:977px" width="70" height="15" shape-rendering="crispEdges"><rect x="0" y="0" width="5" height="5" fill="#cdd3e2"/><rect x="5" y="0" width="5" height="5" fill="#9fb2d3"/><rect x="10" y="0" width="5" height="5" fill="#afbcd6"/><rect x="15" y="0" width="5" height="5" fill="#b5c8d8"/><rect x="20" y="0" width="5" height="5" fill="#bcc6d9"/><rect x="25" y="0" width="5" height="5" fill="#cdd3e2"/><rect x="30" y="0" width="5" height="5" fill="#93aad0"/><rect x="35" y="0" width="5" height="5" fill="#bcc6d9"/><rect x="40" y="0" width="5" height="5" fill="#93aad0"/><rect x="45" y="0" width="5" height="5" fill="#afbcd6"/><rect x="50" y="0" width="5" height="5" fill="#f4f4f2"/><rect x="55" y="0" width="5" height="5" fill="#b7c2d8"/><rect x="60" y="0" width="5" height="5" fill="#93aad0"/><rect x="65" y="0" width="5" height="5" fill="#93aad0"/><rect x="0" y="5" width="5" height="5" fill="#c9cfdf"/><rect x="5" y="5" width="5" height="5" fill="#afbcd6"/><rect x="10" y="5" width="5" height="5" fill="#f4f4f2"/><rect x="15" y="5" width="5" height="5" fill="#f4f4f2"/><rect x="20" y="5" width="5" height="5" fill="#b5c8d8"/><rect x="25" y="5" width="5" height="5" fill="#b5c8d8"/><rect x="30" y="5" width="5" height="5" fill="#cdd3e2"/><rect x="35" y="5" width="5" height="5" fill="#eef0f4"/><rect x="40" y="5" width="5" height="5" fill="#c5cde0"/><rect x="45" y="5" width="5" height="5" fill="#b7c2d8"/><rect x="50" y="5" width="5" height="5" fill="#f4f4f2"/><rect x="55" y="5" width="5" height="5" fill="#eef0f4"/><rect x="60" y="5" width="5" height="5" fill="#afbcd6"/><rect x="65" y="5" width="5" height="5" fill="#d8dde8"/><rect x="0" y="10" width="5" height="5" fill="#f1f2f6"/><rect x="5" y="10" width="5" height="5" fill="#c8d2e2"/><rect x="10" y="10" width="5" height="5" fill="#e9ecf2"/><rect x="15" y="10" width="5" height="5" fill="#ced6e5"/><rect x="20" y="10" width="5" height="5" fill="#c8d2e2"/><rect x="25" y="10" width="5" height="5" fill="#d9dfea"/><rect x="30" y="10" width="5" height="5" fill="#dfe6ee"/><rect x="35" y="10" width="5" height="5" fill="#e1e5ee"/><rect x="40" y="10" width="5" height="5" fill="#f1f2f6"/><rect x="45" y="10" width="5" height="5" fill="#e9ecf2"/><rect x="50" y="10" width="5" height="5" fill="#e9ecf2"/><rect x="55" y="10" width="5" height="5" fill="#dfe6ee"/><rect x="60" y="10" width="5" height="5" fill="#dfe6ee"/><rect x="65" y="10" width="5" height="5" fill="#d9dfea"/></svg><svg style="position:absolute;left:118px;top:934px" width="165" height="15" shape-rendering="crispEdges"><rect x="0" y="0" width="5" height="5" fill="#9fb2d3"/><rect x="5" y="0" width="5" height="5" fill="#9fb2d3"/><rect x="10" y="0" width="5" height="5" fill="#9fb2d3"/><rect x="15" y="0" width="5" height="5" fill="#eef0f4"/><rect x="20" y="0" width="5" height="5" fill="#eef0f4"/><rect x="25" y="0" width="5" height="5" fill="#c9cfdf"/><rect x="30" y="0" width="5" height="5" fill="#9fb2d3"/><rect x="35" y="0" width="5" height="5" fill="#afbcd6"/><rect x="40" y="0" width="5" height="5" fill="#c9cfdf"/><rect x="45" y="0" width="5" height="5" fill="#cdd3e2"/><rect x="50" y="0" width="5" height="5" fill="#9fb2d3"/><rect x="55" y="0" width="5" height="5" fill="#d8dde8"/><rect x="60" y="0" width="5" height="5" fill="#b5c8d8"/><rect x="65" y="0" width="5" height="5" fill="#c9cfdf"/><rect x="70" y="0" width="5" height="5" fill="#afbcd6"/><rect x="75" y="0" width="5" height="5" fill="#c5cde0"/><rect x="80" y="0" width="5" height="5" fill="#a7bad6"/><rect x="85" y="0" width="5" height="5" fill="#c9cfdf"/><rect x="90" y="0" width="5" height="5" fill="#a7bad6"/><rect x="95" y="0" width="5" height="5" fill="#c5cde0"/><rect x="100" y="0" width="5" height="5" fill="#cdd3e2"/><rect x="105" y="0" width="5" height="5" fill="#b5c8d8"/><rect x="110" y="0" width="5" height="5" fill="#f4f4f2"/><rect x="115" y="0" width="5" height="5" fill="#93aad0"/><rect x="120" y="0" width="5" height="5" fill="#d8dde8"/><rect x="125" y="0" width="5" height="5" fill="#b5c8d8"/><rect x="130" y="0" width="5" height="5" fill="#cdd3e2"/><rect x="135" y="0" width="5" height="5" fill="#d8dde8"/><rect x="140" y="0" width="5" height="5" fill="#f4f4f2"/><rect x="145" y="0" width="5" height="5" fill="#bcc6d9"/><rect x="150" y="0" width="5" height="5" fill="#93aad0"/><rect x="155" y="0" width="5" height="5" fill="#d8dde8"/><rect x="160" y="0" width="5" height="5" fill="#afbcd6"/><rect x="0" y="5" width="5" height="5" fill="#a7bad6"/><rect x="5" y="5" width="5" height="5" fill="#b5c8d8"/><rect x="10" y="5" width="5" height="5" fill="#cdd3e2"/><rect x="15" y="5" width="5" height="5" fill="#cdd3e2"/><rect x="20" y="5" width="5" height="5" fill="#c5cde0"/><rect x="25" y="5" width="5" height="5" fill="#a7bad6"/><rect x="30" y="5" width="5" height="5" fill="#bcc6d9"/><rect x="35" y="5" width="5" height="5" fill="#b5c8d8"/><rect x="40" y="5" width="5" height="5" fill="#c5cde0"/><rect x="45" y="5" width="5" height="5" fill="#bcc6d9"/><rect x="50" y="5" width="5" height="5" fill="#cdd3e2"/><rect x="55" y="5" width="5" height="5" fill="#bcc6d9"/><rect x="60" y="5" width="5" height="5" fill="#9fb2d3"/><rect x="65" y="5" width="5" height="5" fill="#93aad0"/><rect x="70" y="5" width="5" height="5" fill="#a3b3d2"/><rect x="75" y="5" width="5" height="5" fill="#cdd3e2"/><rect x="80" y="5" width="5" height="5" fill="#f4f4f2"/><rect x="85" y="5" width="5" height="5" fill="#b7c2d8"/><rect x="90" y="5" width="5" height="5" fill="#eef0f4"/><rect x="95" y="5" width="5" height="5" fill="#c3d6e3"/><rect x="100" y="5" width="5" height="5" fill="#afbcd6"/><rect x="105" y="5" width="5" height="5" fill="#afbcd6"/><rect x="110" y="5" width="5" height="5" fill="#afbcd6"/><rect x="115" y="5" width="5" height="5" fill="#eef0f4"/><rect x="120" y="5" width="5" height="5" fill="#b5c8d8"/><rect x="125" y="5" width="5" height="5" fill="#cdd3e2"/><rect x="130" y="5" width="5" height="5" fill="#afbcd6"/><rect x="135" y="5" width="5" height="5" fill="#9fb2d3"/><rect x="140" y="5" width="5" height="5" fill="#bcc6d9"/><rect x="145" y="5" width="5" height="5" fill="#93aad0"/><rect x="150" y="5" width="5" height="5" fill="#b7c2d8"/><rect x="155" y="5" width="5" height="5" fill="#d8dde8"/><rect x="160" y="5" width="5" height="5" fill="#9fb2d3"/><rect x="0" y="10" width="5" height="5" fill="#f1f2f6"/><rect x="5" y="10" width="5" height="5" fill="#d9dfea"/><rect x="10" y="10" width="5" height="5" fill="#e9ecf2"/><rect x="15" y="10" width="5" height="5" fill="#ced6e5"/><rect x="20" y="10" width="5" height="5" fill="#f1f2f6"/><rect x="25" y="10" width="5" height="5" fill="#f1f2f6"/><rect x="30" y="10" width="5" height="5" fill="#ced6e5"/><rect x="35" y="10" width="5" height="5" fill="#c8d2e2"/><rect x="40" y="10" width="5" height="5" fill="#c8d2e2"/><rect x="45" y="10" width="5" height="5" fill="#c8d2e2"/><rect x="50" y="10" width="5" height="5" fill="#e9ecf2"/><rect x="55" y="10" width="5" height="5" fill="#e1e5ee"/><rect x="60" y="10" width="5" height="5" fill="#d9dfea"/><rect x="65" y="10" width="5" height="5" fill="#e9ecf2"/><rect x="70" y="10" width="5" height="5" fill="#dfe6ee"/><rect x="75" y="10" width="5" height="5" fill="#dfe6ee"/><rect x="80" y="10" width="5" height="5" fill="#ced6e5"/><rect x="85" y="10" width="5" height="5" fill="#dfe6ee"/><rect x="90" y="10" width="5" height="5" fill="#dfe6ee"/><rect x="95" y="10" width="5" height="5" fill="#d9dfea"/><rect x="100" y="10" width="5" height="5" fill="#c8d2e2"/><rect x="105" y="10" width="5" height="5" fill="#c8d2e2"/><rect x="110" y="10" width="5" height="5" fill="#c8d2e2"/><rect x="115" y="10" width="5" height="5" fill="#e1e5ee"/><rect x="120" y="10" width="5" height="5" fill="#e9ecf2"/><rect x="125" y="10" width="5" height="5" fill="#e1e5ee"/><rect x="130" y="10" width="5" height="5" fill="#dfe6ee"/><rect x="135" y="10" width="5" height="5" fill="#ced6e5"/><rect x="140" y="10" width="5" height="5" fill="#c8d2e2"/><rect x="145" y="10" width="5" height="5" fill="#c8d2e2"/><rect x="150" y="10" width="5" height="5" fill="#dfe6ee"/><rect x="155" y="10" width="5" height="5" fill="#f1f2f6"/><rect x="160" y="10" width="5" height="5" fill="#dfe6ee"/></svg><svg style="position:absolute;left:118px;top:954px" width="45" height="15" shape-rendering="crispEdges"><rect x="0" y="0" width="5" height="5" fill="#b7c2d8"/><rect x="5" y="0" width="5" height="5" fill="#c5cde0"/><rect x="10" y="0" width="5" height="5" fill="#afbcd6"/><rect x="15" y="0" width="5" height="5" fill="#f4f4f2"/><rect x="20" y="0" width="5" height="5" fill="#f4f4f2"/><rect x="25" y="0" width="5" height="5" fill="#f4f4f2"/><rect x="30" y="0" width="5" height="5" fill="#c3d6e3"/><rect x="35" y="0" width="5" height="5" fill="#b5c8d8"/><rect x="40" y="0" width="5" height="5" fill="#c3d6e3"/><rect x="0" y="5" width="5" height="5" fill="#d8dde8"/><rect x="5" y="5" width="5" height="5" fill="#d8dde8"/><rect x="10" y="5" width="5" height="5" fill="#cdd3e2"/><rect x="15" y="5" width="5" height="5" fill="#93aad0"/><rect x="20" y="5" width="5" height="5" fill="#c5cde0"/><rect x="25" y="5" width="5" height="5" fill="#cdd3e2"/><rect x="30" y="5" width="5" height="5" fill="#a7bad6"/><rect x="35" y="5" width="5" height="5" fill="#a7bad6"/><rect x="40" y="5" width="5" height="5" fill="#b5c8d8"/><rect x="0" y="10" width="5" height="5" fill="#ced6e5"/><rect x="5" y="10" width="5" height="5" fill="#e1e5ee"/><rect x="10" y="10" width="5" height="5" fill="#c8d2e2"/><rect x="15" y="10" width="5" height="5" fill="#ced6e5"/><rect x="20" y="10" width="5" height="5" fill="#ced6e5"/><rect x="25" y="10" width="5" height="5" fill="#ced6e5"/><rect x="30" y="10" width="5" height="5" fill="#c8d2e2"/><rect x="35" y="10" width="5" height="5" fill="#c8d2e2"/><rect x="40" y="10" width="5" height="5" fill="#dfe6ee"/></svg><svg style="position:absolute;left:314px;top:921px" width="170" height="15" shape-rendering="crispEdges"><rect x="0" y="0" width="5" height="5" fill="#8aa3cc"/><rect x="5" y="0" width="5" height="5" fill="#5f80b8"/><rect x="10" y="0" width="5" height="5" fill="#6a88bd"/><rect x="15" y="0" width="5" height="5" fill="#7590c0"/><rect x="20" y="0" width="5" height="5" fill="#7590c0"/><rect x="25" y="0" width="5" height="5" fill="#6a88bd"/><rect x="30" y="0" width="5" height="5" fill="#9fb1d2"/><rect x="35" y="0" width="5" height="5" fill="#6f8cc0"/><rect x="40" y="0" width="5" height="5" fill="#c3cde0"/><rect x="45" y="0" width="5" height="5" fill="#7590c0"/><rect x="50" y="0" width="5" height="5" fill="#93a7c6"/><rect x="55" y="0" width="5" height="5" fill="#d4dae6"/><rect x="60" y="0" width="5" height="5" fill="#a9b8d4"/><rect x="65" y="0" width="5" height="5" fill="#9fb1d2"/><rect x="70" y="0" width="5" height="5" fill="#93a7c6"/><rect x="75" y="0" width="5" height="5" fill="#a9b8d4"/><rect x="80" y="0" width="5" height="5" fill="#5f80b8"/><rect x="85" y="0" width="5" height="5" fill="#93a7c6"/><rect x="90" y="0" width="5" height="5" fill="#b7c3da"/><rect x="95" y="0" width="5" height="5" fill="#d4dae6"/><rect x="100" y="0" width="5" height="5" fill="#6a88bd"/><rect x="105" y="0" width="5" height="5" fill="#8aa3cc"/><rect x="110" y="0" width="5" height="5" fill="#8aa3cc"/><rect x="115" y="0" width="5" height="5" fill="#8aa3cc"/><rect x="120" y="0" width="5" height="5" fill="#a9b8d4"/><rect x="125" y="0" width="5" height="5" fill="#5f80b8"/><rect x="130" y="0" width="5" height="5" fill="#c3cde0"/><rect x="135" y="0" width="5" height="5" fill="#6f8cc0"/><rect x="140" y="0" width="5" height="5" fill="#b7c3da"/><rect x="145" y="0" width="5" height="5" fill="#a9b8d4"/><rect x="150" y="0" width="5" height="5" fill="#6f8cc0"/><rect x="155" y="0" width="5" height="5" fill="#6a88bd"/><rect x="160" y="0" width="5" height="5" fill="#c3cde0"/><rect x="165" y="0" width="5" height="5" fill="#7590c0"/><rect x="0" y="5" width="5" height="5" fill="#7590c0"/><rect x="5" y="5" width="5" height="5" fill="#5f80b8"/><rect x="10" y="5" width="5" height="5" fill="#a9b8d4"/><rect x="15" y="5" width="5" height="5" fill="#7d99c6"/><rect x="20" y="5" width="5" height="5" fill="#a9b8d4"/><rect x="25" y="5" width="5" height="5" fill="#8fa9c9"/><rect x="30" y="5" width="5" height="5" fill="#93a7c6"/><rect x="35" y="5" width="5" height="5" fill="#6f8cc0"/><rect x="40" y="5" width="5" height="5" fill="#7d99c6"/><rect x="45" y="5" width="5" height="5" fill="#5f80b8"/><rect x="50" y="5" width="5" height="5" fill="#6f8cc0"/><rect x="55" y="5" width="5" height="5" fill="#5f80b8"/><rect x="60" y="5" width="5" height="5" fill="#6f8cc0"/><rect x="65" y="5" width="5" height="5" fill="#7590c0"/><rect x="70" y="5" width="5" height="5" fill="#b7c3da"/><rect x="75" y="5" width="5" height="5" fill="#d4dae6"/><rect x="80" y="5" width="5" height="5" fill="#93a7c6"/><rect x="85" y="5" width="5" height="5" fill="#a9b8d4"/><rect x="90" y="5" width="5" height="5" fill="#7590c0"/><rect x="95" y="5" width="5" height="5" fill="#7590c0"/><rect x="100" y="5" width="5" height="5" fill="#6f8cc0"/><rect x="105" y="5" width="5" height="5" fill="#7d99c6"/><rect x="110" y="5" width="5" height="5" fill="#93a7c6"/><rect x="115" y="5" width="5" height="5" fill="#93a7c6"/><rect x="120" y="5" width="5" height="5" fill="#b7c3da"/><rect x="125" y="5" width="5" height="5" fill="#8aa3cc"/><rect x="130" y="5" width="5" height="5" fill="#a9b8d4"/><rect x="135" y="5" width="5" height="5" fill="#6f8cc0"/><rect x="140" y="5" width="5" height="5" fill="#93a7c6"/><rect x="145" y="5" width="5" height="5" fill="#b7c3da"/><rect x="150" y="5" width="5" height="5" fill="#8fa9c9"/><rect x="155" y="5" width="5" height="5" fill="#6f8cc0"/><rect x="160" y="5" width="5" height="5" fill="#7d99c6"/><rect x="165" y="5" width="5" height="5" fill="#7590c0"/><rect x="0" y="10" width="5" height="5" fill="#bfcbe0"/><rect x="5" y="10" width="5" height="5" fill="#d3dbe8"/><rect x="10" y="10" width="5" height="5" fill="#bfcbe0"/><rect x="15" y="10" width="5" height="5" fill="#c9d3e4"/><rect x="20" y="10" width="5" height="5" fill="#d3dbe8"/><rect x="25" y="10" width="5" height="5" fill="#bfcbe0"/><rect x="30" y="10" width="5" height="5" fill="#c9d3e4"/><rect x="35" y="10" width="5" height="5" fill="#e8ecf3"/><rect x="40" y="10" width="5" height="5" fill="#dfe5ef"/><rect x="45" y="10" width="5" height="5" fill="#d3dbe8"/><rect x="50" y="10" width="5" height="5" fill="#bfcbe0"/><rect x="55" y="10" width="5" height="5" fill="#eef1f6"/><rect x="60" y="10" width="5" height="5" fill="#dfe5ef"/><rect x="65" y="10" width="5" height="5" fill="#e8ecf3"/><rect x="70" y="10" width="5" height="5" fill="#c9d3e4"/><rect x="75" y="10" width="5" height="5" fill="#e8ecf3"/><rect x="80" y="10" width="5" height="5" fill="#d3dbe8"/><rect x="85" y="10" width="5" height="5" fill="#e8ecf3"/><rect x="90" y="10" width="5" height="5" fill="#e8ecf3"/><rect x="95" y="10" width="5" height="5" fill="#c9d3e4"/><rect x="100" y="10" width="5" height="5" fill="#e8ecf3"/><rect x="105" y="10" width="5" height="5" fill="#d3dbe8"/><rect x="110" y="10" width="5" height="5" fill="#d3dbe8"/><rect x="115" y="10" width="5" height="5" fill="#dfe5ef"/><rect x="120" y="10" width="5" height="5" fill="#eef1f6"/><rect x="125" y="10" width="5" height="5" fill="#c9d3e4"/><rect x="130" y="10" width="5" height="5" fill="#eef1f6"/><rect x="135" y="10" width="5" height="5" fill="#e8ecf3"/><rect x="140" y="10" width="5" height="5" fill="#e8ecf3"/><rect x="145" y="10" width="5" height="5" fill="#c9d3e4"/><rect x="150" y="10" width="5" height="5" fill="#c9d3e4"/><rect x="155" y="10" width="5" height="5" fill="#bfcbe0"/><rect x="160" y="10" width="5" height="5" fill="#dfe5ef"/><rect x="165" y="10" width="5" height="5" fill="#eef1f6"/></svg><svg style="position:absolute;left:314px;top:941px" width="110" height="20" shape-rendering="crispEdges"><rect x="0" y="0" width="5" height="5" fill="#e8ecf3"/><rect x="5" y="0" width="5" height="5" fill="#c9d3e4"/><rect x="10" y="0" width="5" height="5" fill="#dfe5ef"/><rect x="15" y="0" width="5" height="5" fill="#e8ecf3"/><rect x="20" y="0" width="5" height="5" fill="#dfe5ef"/><rect x="25" y="0" width="5" height="5" fill="#eef1f6"/><rect x="30" y="0" width="5" height="5" fill="#e8ecf3"/><rect x="35" y="0" width="5" height="5" fill="#c9d3e4"/><rect x="40" y="0" width="5" height="5" fill="#dfe5ef"/><rect x="45" y="0" width="5" height="5" fill="#bfcbe0"/><rect x="50" y="0" width="5" height="5" fill="#dfe5ef"/><rect x="55" y="0" width="5" height="5" fill="#e8ecf3"/><rect x="60" y="0" width="5" height="5" fill="#c9d3e4"/><rect x="65" y="0" width="5" height="5" fill="#c9d3e4"/><rect x="70" y="0" width="5" height="5" fill="#bfcbe0"/><rect x="75" y="0" width="5" height="5" fill="#d3dbe8"/><rect x="80" y="0" width="5" height="5" fill="#bfcbe0"/><rect x="85" y="0" width="5" height="5" fill="#dfe5ef"/><rect x="90" y="0" width="5" height="5" fill="#dfe5ef"/><rect x="95" y="0" width="5" height="5" fill="#e8ecf3"/><rect x="100" y="0" width="5" height="5" fill="#d3dbe8"/><rect x="105" y="0" width="5" height="5" fill="#e8ecf3"/><rect x="0" y="5" width="5" height="5" fill="#9fb1d2"/><rect x="5" y="5" width="5" height="5" fill="#93a7c6"/><rect x="10" y="5" width="5" height="5" fill="#5f80b8"/><rect x="15" y="5" width="5" height="5" fill="#d4dae6"/><rect x="20" y="5" width="5" height="5" fill="#7d99c6"/><rect x="25" y="5" width="5" height="5" fill="#7590c0"/><rect x="30" y="5" width="5" height="5" fill="#a9b8d4"/><rect x="35" y="5" width="5" height="5" fill="#93a7c6"/><rect x="40" y="5" width="5" height="5" fill="#d4dae6"/><rect x="45" y="5" width="5" height="5" fill="#b7c3da"/><rect x="50" y="5" width="5" height="5" fill="#8fa9c9"/><rect x="55" y="5" width="5" height="5" fill="#8fa9c9"/><rect x="60" y="5" width="5" height="5" fill="#7d99c6"/><rect x="65" y="5" width="5" height="5" fill="#9fb1d2"/><rect x="70" y="5" width="5" height="5" fill="#8aa3cc"/><rect x="75" y="5" width="5" height="5" fill="#7590c0"/><rect x="80" y="5" width="5" height="5" fill="#8aa3cc"/><rect x="85" y="5" width="5" height="5" fill="#a9b8d4"/><rect x="90" y="5" width="5" height="5" fill="#8aa3cc"/><rect x="95" y="5" width="5" height="5" fill="#8fa9c9"/><rect x="100" y="5" width="5" height="5" fill="#b7c3da"/><rect x="105" y="5" width="5" height="5" fill="#8aa3cc"/><rect x="0" y="10" width="5" height="5" fill="#5f80b8"/><rect x="5" y="10" width="5" height="5" fill="#6a88bd"/><rect x="10" y="10" width="5" height="5" fill="#6f8cc0"/><rect x="15" y="10" width="5" height="5" fill="#b7c3da"/><rect x="20" y="10" width="5" height="5" fill="#8fa9c9"/><rect x="25" y="10" width="5" height="5" fill="#6a88bd"/><rect x="30" y="10" width="5" height="5" fill="#a9b8d4"/><rect x="35" y="10" width="5" height="5" fill="#6a88bd"/><rect x="40" y="10" width="5" height="5" fill="#b7c3da"/><rect x="45" y="10" width="5" height="5" fill="#8aa3cc"/><rect x="50" y="10" width="5" height="5" fill="#7590c0"/><rect x="55" y="10" width="5" height="5" fill="#d4dae6"/><rect x="60" y="10" width="5" height="5" fill="#7d99c6"/><rect x="65" y="10" width="5" height="5" fill="#6f8cc0"/><rect x="70" y="10" width="5" height="5" fill="#8fa9c9"/><rect x="75" y="10" width="5" height="5" fill="#5f80b8"/><rect x="80" y="10" width="5" height="5" fill="#7d99c6"/><rect x="85" y="10" width="5" height="5" fill="#6f8cc0"/><rect x="90" y="10" width="5" height="5" fill="#8fa9c9"/><rect x="95" y="10" width="5" height="5" fill="#8fa9c9"/><rect x="100" y="10" width="5" height="5" fill="#d4dae6"/><rect x="105" y="10" width="5" height="5" fill="#7d99c6"/><rect x="0" y="15" width="5" height="5" fill="#dfe5ef"/><rect x="5" y="15" width="5" height="5" fill="#bfcbe0"/><rect x="10" y="15" width="5" height="5" fill="#c9d3e4"/><rect x="15" y="15" width="5" height="5" fill="#e8ecf3"/><rect x="20" y="15" width="5" height="5" fill="#bfcbe0"/><rect x="25" y="15" width="5" height="5" fill="#c9d3e4"/><rect x="30" y="15" width="5" height="5" fill="#dfe5ef"/><rect x="35" y="15" width="5" height="5" fill="#c9d3e4"/><rect x="40" y="15" width="5" height="5" fill="#dfe5ef"/><rect x="45" y="15" width="5" height="5" fill="#c9d3e4"/><rect x="50" y="15" width="5" height="5" fill="#dfe5ef"/><rect x="55" y="15" width="5" height="5" fill="#dfe5ef"/><rect x="60" y="15" width="5" height="5" fill="#d3dbe8"/><rect x="65" y="15" width="5" height="5" fill="#e8ecf3"/><rect x="70" y="15" width="5" height="5" fill="#bfcbe0"/><rect x="75" y="15" width="5" height="5" fill="#dfe5ef"/><rect x="80" y="15" width="5" height="5" fill="#eef1f6"/><rect x="85" y="15" width="5" height="5" fill="#d3dbe8"/><rect x="90" y="15" width="5" height="5" fill="#d3dbe8"/><rect x="95" y="15" width="5" height="5" fill="#d3dbe8"/><rect x="100" y="15" width="5" height="5" fill="#d3dbe8"/><rect x="105" y="15" width="5" height="5" fill="#eef1f6"/></svg><div class="t" style="left:316.00px;top:967.00px;line-height:12.5px;color:#5aa2d8;font-size:12.5px;font-weight:700;transform:scaleX(0.8531);transform-origin:0 0;">Entry</div><div class="t" style="left:510.70px;top:943.00px;line-height:15px;color:#0e3784;font-size:15px;font-weight:400;letter-spacing:-0.556px;">bFZK</div><div class="t" style="left:705.00px;top:934.00px;line-height:15px;color:#0e3784;font-size:15px;font-weight:400;letter-spacing:-0.173px;">01.09.2023, 06:00 -</div><div class="t" style="left:705.00px;top:955.00px;line-height:15px;color:#0e3784;font-size:15px;font-weight:400;letter-spacing:-0.163px;">01.10.2023, 06:00</div><div class="t" style="left:900.00px;top:934.00px;line-height:15px;color:#0e3784;font-size:15px;font-weight:400;letter-spacing:-0.107px;">50,000</div><div class="t" style="left:900.00px;top:957.00px;line-height:12px;color:#0e3784;font-size:12px;font-weight:400;letter-spacing:0.502px;">Cm³/h</div><div class="t" style="left:997.50px;top:934.00px;line-height:15px;color:#0e3784;font-size:15px;font-weight:400;letter-spacing:0.216px;">0.13</div><div class="t" style="left:1030.00px;top:936.00px;line-height:12px;color:#0e3784;font-size:12px;font-weight:400;letter-spacing:-0.917px;">EUR /</div><div class="t" style="left:997.50px;top:957.00px;line-height:12px;color:#0e3784;font-size:12px;font-weight:400;letter-spacing:0.502px;">Cm³/h</div><div class="t" style="left:1094.80px;top:943.00px;line-height:15px;color:#0e3784;font-size:15px;font-weight:400;letter-spacing:-1.053px;">FCFS</div><div class="t" style="left:1192.50px;top:943.00px;line-height:15px;color:#0e3784;font-size:15px;font-weight:400;letter-spacing:-0.062px;">01.09.2023, 11:34</div><div class="t" style="left:1387.50px;top:943.00px;line-height:15px;color:#0e3784;font-size:15px;font-weight:400;letter-spacing:-0.051px;">Some other test</div><div style="position:absolute;left:1582px;top:943.6px;width:14.4px;height:14.4px;border-radius:50%;background:#12c27a;"></div><div class="t" style="left:1601.30px;top:943.00px;line-height:15px;color:#0e3784;font-size:15px;font-weight:400;letter-spacing:-0.337px;">Created</div><div style="position:absolute;left:1780px;top:940px;width:93px;height:24px;border-radius:12px;background:#c8e2f2;"></div><div style="position:absolute;left:1840.5px;top:940px;width:1px;height:24px;background:#ffffff;"></div><div class="t" style="left:1792.00px;top:946.00px;line-height:12px;color:#003a8c;font-size:12px;font-weight:700;transform:scaleX(0.9325);transform-origin:0 0;">Details</div><div style="position:absolute;left:1854px;top:950px;width:0;height:0;border-left:4px solid transparent;border-right:4px solid transparent;border-top:4.5px solid #003a8c;"></div><div class="t" style="left:23.50px;top:1029.00px;line-height:15px;color:#0e3784;font-size:15px;font-weight:400;letter-spacing:-0.415px;">11XCUCUM</div><div class="t" style="left:317.00px;top:1038.00px;line-height:15px;color:#0e3784;font-size:15px;font-weight:400;letter-spacing:-0.146px;">21X000000000001441</div><div style="position:absolute;left:8px;top:220px;width:1871px;height:351px;border:2px solid #990000;box-shadow:2px 2px 3px rgba(0,0,0,0.35), inset 3px 3px 4px rgba(0,0,0,0.30);pointer-events:none;"></div><div style="position:absolute;left:7px;top:582px;width:1872px;height:432px;border:2px solid #990000;box-shadow:2px 2px 3px rgba(0,0,0,0.35), inset 3px 3px 4px rgba(0,0,0,0.30);pointer-events:none;"></div><div style="position:absolute;left:848px;top:565px;width:29px;height:29px;border-radius:50%;background:#8e0a0a;color:#fff;font-size:17px;line-height:29px;text-align:center;">5</div>
</body></html>
